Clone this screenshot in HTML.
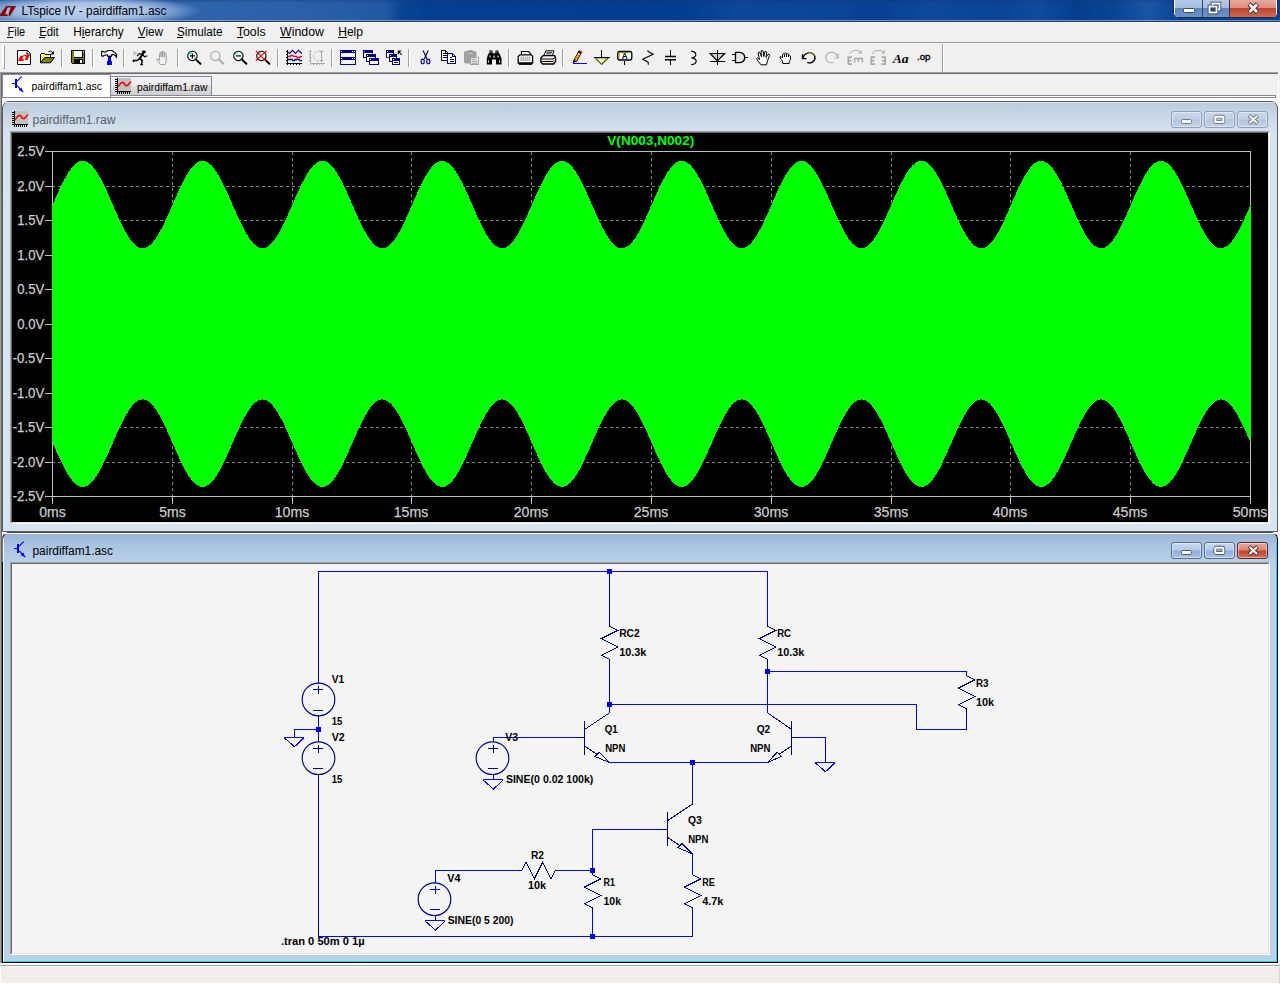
<!DOCTYPE html>
<html lang="en"><head><meta charset="utf-8"><title>LTspice IV - pairdiffam1.asc</title>
<style>
html,body{margin:0;padding:0}
body{width:1280px;height:984px;position:relative;overflow:hidden;background:#f0f0f0;font-family:"Liberation Sans",sans-serif;font-size:12px;color:#000}
div,span,svg{position:absolute;box-sizing:border-box}
svg{overflow:visible}
#title{left:0;top:0;width:1280px;height:22px;background:#0a4092}
#title .bg{left:0;top:0;width:1280px;height:21px;background:
 radial-gradient(ellipse 118px 15px at 84px 11px,rgba(196,214,240,.95) 0%,rgba(176,200,234,.9) 55%,rgba(140,172,218,.6) 80%,rgba(90,130,190,0) 100%),
 linear-gradient(rgba(20,50,110,.35) 0,rgba(20,50,110,0) 3px),
 linear-gradient(90deg,#4a78b8 0px,#3d6eb2 150px,#2f64ab 185px,#2b60a8 300px,#2259a3 385px,#0a4394 402px,#053d90 430px,#043c8f 680px,#0e469a 740px,#0c4497 840px,#083f92 870px,#0f479b 930px,#0b4396 1000px,#114a9e 1040px,#063d8f 1075px,#0a4294 1110px,#1b55a6 1150px,#0d4597 1172px,#0a4092 1280px)}
#title .ln1{left:0;top:20px;width:1280px;height:1px;background:rgba(190,210,240,.55)}
#title .ln2{left:0;top:21px;width:1280px;height:1px;background:#1d3a68}
#title .txt{left:21px;top:3px;font-size:12px;line-height:14px;white-space:nowrap;color:#000}
#menu{left:0;top:22px;width:1280px;height:22px;background:#f0f0f0;border-top:1px solid #fff}
#menu .ln1{left:0;top:19px;width:1280px;height:1px;background:#a0a0a0}
#menu .ln2{left:0;top:20px;width:1280px;height:1px;background:#fff}
#menu span{top:3px;line-height:14px;font-size:12px;white-space:nowrap}
#menu u{text-decoration:none;border-bottom:1px solid #000;display:inline-block;line-height:12px}
#tb{left:0;top:44px;width:1280px;height:28px;background:#f0f0f0}
#tb .grip{left:2px;top:2px;width:3px;height:23px;border-left:2px solid #fff;border-right:1px solid #a0a0a0;border-bottom:1px solid #a0a0a0}
#tb .sep{top:5px;margin-left:-1px;width:2px;height:18px;border-left:1px solid #a0a0a0;border-right:1px solid #fff}
#tb .end{left:942px;top:0;width:2px;height:28px;border-left:1px solid #a0a0a0;border-right:1px solid #fff}
#tb svg{top:6px;width:16px;height:16px}
#tabs{left:0;top:72px;width:1280px;height:29px;background:#f0f0f0}
#mdi{left:0;top:98px;width:1280px;height:865px;background:#fff}
#mdi .lb{left:0;top:0;width:2px;height:865px;background:#696969;border-left:1px solid #a0a0a0}
#status{left:0;top:963px;width:1280px;height:21px;background:#fff}
#status .l{left:0;top:2px;width:1280px;height:1px;background:#a0a0a0}
#status .b{left:1px;top:4px;width:1278px;height:16px;background:#f0edeb}
#status .r{left:1279px;top:4px;width:1px;height:16px;background:#d2d2d2}
.win{border:1px solid #5c5c5c;border-radius:7px 7px 0 0}
.win .ttl{left:28px;top:9px;font-size:12px;line-height:14px;white-space:nowrap}
.cb{border:1px solid #8d9db8;border-radius:3px}

</style></head>
<body>
<div id="title"><div class="bg"></div><div class="ln1"></div><div class="ln2"></div><svg style="left:0;top:0;width:18px;height:20px" viewBox="0 0 18 20"><path d="M-1 15.900 L6.200 6 H16.200 L10 15.900 Z" fill="#8c0505"/><path d="M7.600 7.500 H10.700 L8.300 14.200 H5.200 Z" fill="#a9bcdb"/><path d="M8.400 14 L8.100 16" stroke="#a9bcdb" stroke-width=".9"/></svg><svg style="left:0;top:0;width:300px;height:22px"><text x="21.6" y="15" font-size="12.4" fill="#000" font-weight="normal" text-anchor="start" textLength="144.8" lengthAdjust="spacingAndGlyphs">LTspice IV - pairdiffam1.asc</text></svg>
<div style="left:1173px;top:-3px;width:105px;height:21px;border:1px solid #1c2c4c;border-radius:0 0 5px 5px;background:#fff;overflow:hidden">
 <div style="left:1px;top:2px;width:27px;height:17px;background:linear-gradient(#b4c9e7 0,#a3bde0 47%,#5e86bf 50%,#6c93c9 100%)"></div>
 <div style="left:28px;top:2px;width:1px;height:17px;background:#30446b"></div>
 <div style="left:29px;top:2px;width:26px;height:17px;background:linear-gradient(#b4c9e7 0,#a3bde0 47%,#5e86bf 50%,#6c93c9 100%)"></div>
 <div style="left:55px;top:2px;width:1px;height:17px;background:#4a2a30"></div>
 <div style="left:56px;top:2px;width:46px;height:17px;background:linear-gradient(#e9aaa0 0,#dc8c80 47%,#c3432c 50%,#cf6a52 100%)"></div>
</div>
<svg style="left:1173px;top:0;width:105px;height:20px" viewBox="0 0 105 20">
 <rect x="10.5" y="8.5" width="11" height="4" rx="1" fill="#fff" stroke="#3a4866" stroke-width="1"/>
 <g fill="none" stroke="#3a4866" stroke-width="3.6"><rect x="39.5" y="3.5" width="7" height="6"/><rect x="36.5" y="6.5" width="7" height="6"/></g>
 <g fill="none" stroke="#fff" stroke-width="1.8"><rect x="39.5" y="3.5" width="7" height="6"/></g>
 <rect x="35" y="5" width="10" height="9" fill="#3a4866"/>
 <g fill="none" stroke="#fff" stroke-width="1.8"><rect x="36.5" y="6.5" width="7" height="6"/></g>
 <g stroke-linecap="butt"><path d="M76 4 L84.500 12.500 M84.500 4 L76 12.500" stroke="#4a3035" stroke-width="4.600"/><path d="M76.500 4.500 L84 12 M84 4.500 L76.500 12" stroke="#fff" stroke-width="2.600"/></g>
</svg></div>
<div id="menu"><div class="ln1"></div><div class="ln2"></div><svg style="left:0;top:0;width:400px;height:20px"><text x="7.5" y="13" font-size="12" fill="#000" font-weight="normal" text-anchor="start" textLength="17.7" lengthAdjust="spacingAndGlyphs">File</text><text x="39.2" y="13" font-size="12" fill="#000" font-weight="normal" text-anchor="start" textLength="19.6" lengthAdjust="spacingAndGlyphs">Edit</text><text x="73.2" y="13" font-size="12" fill="#000" font-weight="normal" text-anchor="start" textLength="50.6" lengthAdjust="spacingAndGlyphs">Hierarchy</text><text x="137.8" y="13" font-size="12" fill="#000" font-weight="normal" text-anchor="start" textLength="25.2" lengthAdjust="spacingAndGlyphs">View</text><text x="177" y="13" font-size="12" fill="#000" font-weight="normal" text-anchor="start" textLength="45.6" lengthAdjust="spacingAndGlyphs">Simulate</text><text x="236.8" y="13" font-size="12" fill="#000" font-weight="normal" text-anchor="start" textLength="28.8" lengthAdjust="spacingAndGlyphs">Tools</text><text x="280" y="13" font-size="12" fill="#000" font-weight="normal" text-anchor="start" textLength="44" lengthAdjust="spacingAndGlyphs">Window</text><text x="338.2" y="13" font-size="12" fill="#000" font-weight="normal" text-anchor="start" textLength="24.8" lengthAdjust="spacingAndGlyphs">Help</text><rect x="7" y="14" width="6" height="1" fill="#000" shape-rendering="crispEdges"/><rect x="39" y="14" width="6" height="1" fill="#000" shape-rendering="crispEdges"/><rect x="82" y="14" width="3" height="1" fill="#000" shape-rendering="crispEdges"/><rect x="138" y="14" width="7" height="1" fill="#000" shape-rendering="crispEdges"/><rect x="177" y="14" width="6" height="1" fill="#000" shape-rendering="crispEdges"/><rect x="237" y="14" width="6" height="1" fill="#000" shape-rendering="crispEdges"/><rect x="280" y="14" width="11" height="1" fill="#000" shape-rendering="crispEdges"/><rect x="338" y="14" width="9" height="1" fill="#000" shape-rendering="crispEdges"/></svg></div>
<div id="tb"><div class="grip"></div><div class="end"></div><svg style="left:16px" viewBox="0 0 16 16"><path d="M1.500 .5 H11.500 L14.500 3.500 V14.500 H1.500 Z" fill="#fff" stroke="#000"/><path d="M11 .5 V4 H14.500" fill="none" stroke="#000"/><path d="M4.600 5.800 H7.700 L6.300 8.800 H7.800 L7.300 10.900 H2 L2.900 8.800 Z" fill="#ff0000"/><path d="M7.100 4.800 H14.200 L13.400 6 L12.400 8 L11.400 9.900 H8.800 L9.800 7.200 L9 5.800 H7.400 Z" fill="#ff0000"/></svg><svg style="left:39px" viewBox="0 0 16 16"><g shape-rendering="crispEdges"><path d="M1.500 12.500 V4.500 L2.500 3.500 H5.500 L6.500 4.500 H11.500 V7" fill="#ffff00" stroke="#000"/><path d="M2 5 h1 v1 h-1z M4 5 h1 v1 h-1z M3 6 h1 v1 h-1z M2 7 h1 v1 h-1z M3 8 h1 v1 h-1z M2 9 h1 v1 h-1z M5 6 h1 v1 h-1z M6 5 h1 v1 h-1z M8 5 h1 v1 h-1z M10 5 h1 v1 h-1z M7 6 h1 v1 h-1z M9 6 h1 v1 h-1z M4 7 h1 v1 h-1z" fill="#fff"/></g><path d="M1.500 12.800 L5.500 7.500 H15.500 L11.500 12.800 Z" fill="#808000" stroke="#000"/><path d="M9.500 2 Q11.500 -.2 13.800 2.600" fill="none" stroke="#000"/><path d="M15 1 V4.500 H11.500 Z" fill="#000"/></svg><div class="sep" style="left:62px"></div><svg style="left:70px" viewBox="0 0 16 16"><g shape-rendering="crispEdges"><path d="M1 0 H15 V14 H2 L1 13 Z" fill="#000"/><rect x="2" y="1" width="12" height="12" fill="#808000"/><rect x="3.500" y="0" width="9.500" height="7.700" fill="#000"/><rect x="4" y="1" width="8" height="5.800" fill="#f8f8f8"/><rect x="13" y="1" width="1" height="1.200" fill="#fff"/><rect x="4" y="8.500" width="9" height="5.500" fill="#000"/><rect x="10" y="10" width="2" height="3" fill="#fff"/></g></svg><div class="sep" style="left:93px"></div><svg style="left:101px" viewBox="0 0 16 16"><defs><linearGradient id="hg" x1="0" y1="0" x2="0" y2="1"><stop offset="0" stop-color="#fff"/><stop offset=".55" stop-color="#f4f4f4"/><stop offset="1" stop-color="#9a9a9a"/></linearGradient><linearGradient id="hb" x1="0" y1="0" x2="1" y2="0"><stop offset="0" stop-color="#0000a0"/><stop offset=".5" stop-color="#0000ff"/><stop offset="1" stop-color="#0000c0"/></linearGradient></defs><path d="M.6 1.800 Q.6 1 1.600 1.200 L3.200 2.200 L5.500 1.600 L6.800 .5 H11.200 L14 2.600 L15.600 4.600 V7.600 L14.200 5.400 L12.400 4.600 H10.800 L10.400 6.400 H6.800 L6.200 4.800 L3.400 5.200 L2 6.200 Q.6 6.400 .6 5.400 Z" fill="url(#hg)" stroke="#000" stroke-width="1.100" stroke-linejoin="round"/><path d="M7 6.800 H10 V11 H11 V15 H6 V11 H7 Z" fill="url(#hb)"/></svg><div class="sep" style="left:124px"></div><svg style="left:132px" viewBox="0 0 16 16"><g fill="none" stroke="#000" stroke-linecap="round"><path d="M10.500 1 H13.200 V2.800 H11 Z" fill="#000" stroke-width=".8"/><path d="M11.200 3.400 L7.800 8.400" stroke-width="1.900"/><path d="M10.400 4.200 L7.400 3.600 L5.400 5.600" stroke-width="1.300"/><path d="M11 4.800 L12.600 6.800 L14.800 6" stroke-width="1.300"/><path d="M8 8.400 L10.200 10.600 L9.400 14.200 M8.800 14.400 H10.400" stroke-width="1.500"/><path d="M7.600 8.600 L5 10.600 L1.600 10.400 M1.400 10.400 V11.600" stroke-width="1.500"/></g><path d="M1.500 1.500 L4.500 3.500 M1 3.500 L3.500 5" stroke="#808080" fill="none" stroke-width=".8"/></svg><svg style="left:155px" viewBox="0 0 16 16"><path d="M5.500 14.500 L2 10 Q1.400 8.700 2.600 8.700 L4.500 10.300 V3.100 Q5.300 2.100 6.100 3.100 V7 V1.700 Q7 .7 7.800 1.700 V7 V2.100 Q8.700 1.100 9.500 2.100 V7.300 V3.700 Q10.400 2.800 11.200 3.700 V11 Q11.200 12.900 10 14.500 Z" fill="none" stroke="#a0a0a0" stroke-linejoin="round"/></svg><div class="sep" style="left:178px"></div><svg style="left:186px" viewBox="0 0 16 16"><circle cx="6.4" cy="5.9" r="4.7" fill="#fff" stroke="#000" stroke-width="1.1"/><path d="M3.300 4.600 A3.400 3.400 0 0 1 5.800 2.600" stroke="#00e0e0" fill="none" stroke-width="1.300"/><path d="M9.400 7.400 A3.400 3.400 0 0 1 7.600 9.200" stroke="#00e0e0" fill="none" stroke-width="1"/><path d="M10 9.600 L14.400 13.800" stroke="#000" stroke-width="2" stroke-linecap="round"/><path d="M3.900 5.900 H8.900 M6.400 3.400 V8.400" stroke="#000" stroke-width="1.200"/></svg><svg style="left:209px" viewBox="0 0 16 16"><circle cx="6.4" cy="5.9" r="4.7" fill="#f0f0f0" stroke="#a8a8a8" stroke-width="1.1"/><path d="M10 9.600 L14.400 13.800" stroke="#a8a8a8" stroke-width="2" stroke-linecap="round"/></svg><svg style="left:232px" viewBox="0 0 16 16"><circle cx="6.4" cy="5.9" r="4.7" fill="#fff" stroke="#000" stroke-width="1.1"/><path d="M3.300 4.600 A3.400 3.400 0 0 1 5.800 2.600" stroke="#00e0e0" fill="none" stroke-width="1.300"/><path d="M9.400 7.400 A3.400 3.400 0 0 1 7.600 9.200" stroke="#00e0e0" fill="none" stroke-width="1"/><path d="M10 9.600 L14.400 13.800" stroke="#000" stroke-width="2" stroke-linecap="round"/><path d="M3.900 5.900 H8.900" stroke="#000" stroke-width="1.200"/></svg><svg style="left:255px" viewBox="0 0 16 16"><circle cx="6.4" cy="5.9" r="4.7" fill="#fff" stroke="#000" stroke-width="1.1"/><path d="M3.300 4.600 A3.400 3.400 0 0 1 5.800 2.600" stroke="#00e0e0" fill="none" stroke-width="1.300"/><path d="M9.400 7.400 A3.400 3.400 0 0 1 7.600 9.200" stroke="#00e0e0" fill="none" stroke-width="1"/><path d="M10 9.600 L14.400 13.800" stroke="#000" stroke-width="2" stroke-linecap="round"/><path d="M.8 .8 L11.200 11.200 M11.400 1 L.8 10.800" stroke="#ff0000" stroke-width="1.200"/></svg><div class="sep" style="left:278px"></div><svg style="left:286px" viewBox="0 0 16 16"><rect x="2" y="5" width="14" height="7" fill="#e8fafa"/><g fill="none" shape-rendering="crispEdges"><path d="M1.500 0 V14 M0 13.500 H16" stroke="#000"/><path d="M0 1.500 H1 M0 4.500 H1 M0 7.500 H1 M0 10.500 H1 M1.500 14 V15 M4.500 14 V15 M7.500 14 V15 M10.500 14 V15 M13.500 14 V15" stroke="#000"/></g><path d="M2.300 2.100 L3.500 3.500 L6.500 .3 L9.600 3.500 L12.400 .3 L16 3.500" fill="none" stroke="#000080" stroke-width="1.100"/><path d="M2 6.500 H4.200 L4.700 5.500 H6.800 L7.500 6.400 H10.500 L11.200 7.500 H13.800 L14.500 6.400 H16" fill="none" stroke="#ff0000" stroke-width="1.300"/><path d="M2 9.500 H6.100 L6.800 10.600 H8.400 L9.100 9.500 H13.300 L14 10.600 H16" fill="none" stroke="#000080" stroke-width="1.300"/></svg><svg style="left:309px" viewBox="0 0 16 16"><g fill="none" stroke="#a8a8a8"><path d="M1.500 0 V13.500 H16"/><path d="M0 1.500 H1 M0 4.500 H1 M0 7.500 H1 M0 10.500 H1 M1.500 14 V15 M4.500 14 V15 M7.500 14 V15 M10.500 14 V15 M13.500 14 V15"/><path d="M10.500 .8 Q4.500 2.500 4.500 6 Q4.500 9.500 10.500 11.500" stroke-dasharray="1.500 1"/><path d="M12.500 .8 V11.500 M10.800 2.500 L12.500 .6 L14.200 2.500 M10.800 9.800 L12.500 11.700 L14.200 9.800"/></g></svg><div class="sep" style="left:332px"></div><svg style="left:340px" viewBox="0 0 16 16"><g shape-rendering="crispEdges"><rect x=".5" y=".5" width="15" height="14" fill="#f4f4f4" stroke="#000080"/><rect x="0" y="0" width="16" height="3" fill="#000080"/><rect x="0" y="7" width="16" height="3" fill="#000080"/><path d="M1 1 h1 v1 h-1z M12 1 h1 v1 h-1z M14 1 h1 v1 h-1z M1 8 h1 v1 h-1z M12 8 h1 v1 h-1z M14 8 h1 v1 h-1z" fill="#fff"/></g></svg><svg style="left:363px" viewBox="0 0 16 16"><g shape-rendering="crispEdges"><rect x="0.5" y="0.5" width="9" height="7" fill="#fff" stroke="#000080"/><rect x="0" y="0" width="10" height="2.6" fill="#000080"/><rect x="1" y="1" width="1" height="1" fill="#fff"/><rect x="3.5" y="4.5" width="9" height="7" fill="#fff" stroke="#000080"/><rect x="3" y="4" width="10" height="2.6" fill="#000080"/><rect x="4" y="5" width="1" height="1" fill="#fff"/><rect x="6.5" y="8.5" width="9" height="6" fill="#fff" stroke="#000080"/><rect x="6" y="8" width="10" height="2.6" fill="#000080"/><rect x="7" y="9" width="1" height="1" fill="#fff"/><rect x="1" y="1" width="1" height="1" fill="#ff40a0"/><rect x="9" y="3" width="1" height="1" fill="#ff40a0"/></g></svg><svg style="left:386px" viewBox="0 0 16 16"><g shape-rendering="crispEdges"><rect x="0.5" y="0.5" width="7" height="7" fill="#fff" stroke="#000080"/><rect x="0" y="0" width="8" height="2.6" fill="#000080"/><rect x="1" y="1" width="1" height="1" fill="#fff"/><rect x="3.5" y="4.5" width="7" height="7" fill="#fff" stroke="#000080"/><rect x="3" y="4" width="8" height="2.6" fill="#000080"/><rect x="4" y="5" width="1" height="1" fill="#fff"/><rect x="6.5" y="8.5" width="7" height="6" fill="#fff" stroke="#000080"/><rect x="6" y="8" width="8" height="2.6" fill="#000080"/><rect x="7" y="9" width="1" height="1" fill="#fff"/><rect x="8" y="12" width="4" height="1" fill="#000"/><rect x="1" y="7" width="1" height="1" fill="#ff40a0"/></g><path d="M15.800 5 L12.300 1.200 M12 1 H15.400 M12.300 .7 V4.200" stroke="#000" fill="none" stroke-width="1.100"/></svg><div class="sep" style="left:409px"></div><svg style="left:417px" viewBox="0 0 16 16"><path d="M6.100 .4 L10 9 M11.200 .4 L7.300 9" stroke="#000030" stroke-width="1.100" fill="none"/><ellipse cx="5.700" cy="11.400" rx="1.600" ry="2.300" stroke-width="1.100" stroke="#0000c0" fill="none"/><ellipse cx="11.300" cy="11.400" rx="1.600" ry="2.300" stroke-width="1.100" stroke="#0000c0" fill="none"/></svg><svg style="left:440px" viewBox="0 0 16 16"><g shape-rendering="crispEdges"><path d="M1.500 .5 H5.500 L8.500 3.500 V10.500 H1.500 Z" fill="#fff" stroke="#000"/><path d="M5.500 .5 V3.500 H8.500" fill="none" stroke="#000"/><path d="M3 3.500 H5 M3 5.500 H7 M3 7.500 H7" stroke="#000"/><path d="M7.500 3.500 H12.500 L15.500 6.500 V13.500 H7.500 Z" fill="#fff" stroke="#000080"/><path d="M12.500 3.500 V6.500 H15.500" fill="none" stroke="#000080"/><path d="M9.500 7 H12 M9.500 9.500 H14 M9.500 11.500 H14" stroke="#000"/></g></svg><svg style="left:463px" viewBox="0 0 16 16"><rect x="1" y="1" width="12.500" height="12.500" rx="1.800" fill="#a0a0a0"/><rect x="4.500" y="0" width="5.500" height="2.500" rx="1" fill="#a0a0a0"/><path d="M5 3.500 H9.500" stroke="#c4c4c4"/><g shape-rendering="crispEdges"><rect x="7.500" y="7.500" width="8" height="7" fill="#dcdcdc" stroke="#a0a0a0"/><path d="M9 9.500 H11.500 M9 11.500 H14 M9 13.500 H14" stroke="#a0a0a0" stroke-width=".8"/></g><path d="M13.500 7.500 L15.500 9.500" stroke="#f0f0f0"/></svg><svg style="left:486px" viewBox="0 0 16 16"><g transform="translate(0,-.5)"><path d="M3.500 1 H6.500 V3 L7.500 4 H8.500 L9.500 3 V1 H12.500 V3 L14 5 L15.500 9 V15 H10 V10 H6 V15 H.8 V9 L2 5 L3.500 3 Z" fill="#000"/><path d="M4.500 2 h1 v1 h-1z M10.500 2 h1 v1 h-1z M3.500 6 h1 v2 h-1z M11.500 6 h1 v2 h-1z M7.500 6 h1 v2.500 h-1z M2 11 h1 v2 h-1z M13 11 h1 v2 h-1z" fill="#fff"/></g></svg><div class="sep" style="left:509px"></div><svg style="left:517px" viewBox="0 0 16 16"><path d="M4.500 5 V1.500 H11.500 L13.500 3.500 V5" fill="#fff" stroke="#000" stroke-width="1.200"/><path d="M7 2.500 L8 3.500 L9 2.500" stroke="#808080" fill="none" stroke-width=".8"/><path d="M1.200 13 V6.500 L3 4.800 H14.500 L15.600 6.500 V13 Z" fill="#fff" stroke="#000" stroke-width="1.300"/><rect x="3" y="6.500" width="10.500" height="4.500" fill="#b8b8b8"/><path d="M3 7 H13.500 M3 8 H13.500 M3 9 H13.500 M3 10 H13.500" stroke="#fff" stroke-width=".5" stroke-dasharray="1 1"/><path d="M2 14 H15" stroke="#000" stroke-width="1.800"/><rect x="1.800" y="7" width="1" height="1" fill="#fff"/></svg><svg style="left:540px" viewBox="0 0 16 16"><path d="M3.800 5.500 L5.800 .8 H14 L12.400 5.500" fill="#fff" stroke="#000"/><path d="M6.500 2.400 H12 M6 3.900 H11.500" stroke="#000" stroke-width=".8"/><path d="M.8 8 L3 5.600 H14.600 L15.600 7.600 V11.600 L13.600 14 H2.600 L.8 12 Z" fill="#f4f4f4" stroke="#000" stroke-width="1.300"/><path d="M1 9 H13 M13 9 L15.400 7 M1.500 11.500 H13" stroke="#000"/><path d="M13.600 9.500 V13.500" stroke="#000" stroke-width=".8" stroke-dasharray="1 1"/><rect x="6.500" y="9.800" width="3.500" height="1.200" fill="#ffe000"/></svg><div class="sep" style="left:563px"></div><svg style="left:571px" viewBox="0 0 16 16"><path d="M2.200 12.600 L3 9.800 L8 .8 L10.600 2.200 L5.600 11.200 Z" fill="#ffee00" stroke="#000" stroke-width=".9"/><path d="M2.200 12.600 L3 9.800 L5.600 11.200 Z" fill="#000"/><path d="M4 9.400 L6.400 10.600 M5.200 7.300 L7.600 8.500 M6.400 5.200 L8.800 6.400" stroke="#ff0000" stroke-width="1"/><path d="M8 .8 L10.600 2.200 L9.600 4 L7 2.600 Z" fill="#000"/><circle cx="10.400" cy="2.300" r="1" fill="#ff0000"/><path d="M2 13.500 H16" stroke="#0000ff" shape-rendering="crispEdges"/></svg><svg style="left:594px" viewBox="0 0 16 16"><path d="M7.500 0 V7" stroke="#000" shape-rendering="crispEdges"/><path d="M.8 7.500 H14.600 L7.700 14.400 Z" fill="#f0f0f0" stroke="#606000" stroke-width="1.200"/><path d="M2.500 8.300 H12.800 L7.700 13.200" fill="none" stroke="#a0a000" stroke-width=".8"/><path d="M0 7.500 H15.500" stroke="#000" shape-rendering="crispEdges"/></svg><svg style="left:617px" viewBox="0 0 16 16"><rect x=".8" y="1.500" width="14" height="8.500" rx="1.800" fill="#fff" stroke="#000" stroke-width="1.300"/><path d="M2 8.800 V3.400 Q2 2.700 2.800 2.700 H13" fill="none" stroke="#808000" stroke-width=".9"/><path d="M7.500 10.500 V14.800" stroke="#000" stroke-width="1.200" shape-rendering="crispEdges"/><text x="7.800" y="8.900" font-size="8.200" font-weight="bold" font-family="'Liberation Sans',sans-serif" text-anchor="middle" fill="#000">A</text></svg><svg style="left:640px" viewBox="0 0 16 16"><path d="M7.700 .3 L8.100 1.600 L13.200 4.200 L2.600 9.300 L8.100 12 L8.300 14.700" fill="none" stroke="#000" stroke-width="1.150" stroke-linejoin="round"/></svg><svg style="left:663px" viewBox="0 0 16 16"><path d="M7.500 0 V6 M7.500 10 V15" fill="none" stroke="#000" stroke-width="1.200" shape-rendering="crispEdges"/><path d="M2 6.400 H13 M2 9.800 H13" fill="none" stroke="#000" stroke-width="1.500"/></svg><svg style="left:686px" viewBox="0 0 16 16"><path d="M5.100 1.100 Q9.800 1.600 9.800 4.400 Q9.800 7.200 5.500 7.900 Q10.200 8.400 10.200 11.200 Q10.200 14 5.100 14.700" fill="none" stroke="#000" stroke-width="1.150"/></svg><svg style="left:709px" viewBox="0 0 16 16"><path d="M1.200 3.500 H15.600 L8.400 10.800 Z" fill="#d4d4d4" stroke="#000" stroke-width="1.200"/><path d="M8.500 0 V15 M1 11.500 H16" stroke="#000" stroke-width="1.200" shape-rendering="crispEdges"/></svg><svg style="left:732px" viewBox="0 0 16 16"><path d="M0 4.500 H3.500 M0 10.500 H3.500 M12.500 7.500 H16" stroke="#000" stroke-width="1.200" shape-rendering="crispEdges"/><path d="M3.500 2.400 H8 Q12.700 3.200 12.700 7.500 Q12.700 11.800 8 12.700 H3.500 Z" fill="#e4e4e4" stroke="#000" stroke-width="1.300"/></svg><svg style="left:755px" viewBox="0 0 16 16"><path d="M6 14.800 L2 9.800 Q1 8.100 2.600 8.100 L4.500 9.500 L3 2.800 Q3.800 1.300 5 2.500 L6.500 6.800 L6 1.100 Q7 -.2 8.200 1.100 L8.800 6.600 L9.800 1.800 Q11 .8 11.800 2.100 L11 7.300 L13 4.300 Q14.300 3.800 14.500 5.300 L12.500 10.800 L11.500 14.800 Z" fill="#fff" stroke="#000" stroke-linejoin="round"/><rect x="11" y="7.500" width="1" height="1.200" fill="#00a0c0"/></svg><svg style="left:778px" viewBox="0 0 16 16"><path d="M4.800 13.500 L4.500 11 L2 8 Q1.500 6.500 3 6.500 L4.500 8 V4.500 Q5.500 3.200 6.500 4.500 V3.500 Q7.500 2.200 8.500 3.500 V4 Q9.500 3 10.500 4.200 V5.500 Q11.800 4.600 12.500 6 V9.500 L11.200 11.500 V13.500 Z" fill="#fff" stroke="#000" stroke-linejoin="round"/><path d="M6.500 4.500 V7 M8.500 4 V7 M10.500 5 V7" stroke="#000"/></svg><svg style="left:801px" viewBox="0 0 16 16"><path d="M1.600 8.400 Q3 4.400 6.400 3 Q10 1.800 12.800 4.400 Q15 7.200 13.400 10.200 Q11.400 13.400 7.600 12.900 L6.300 12.400" fill="none" stroke="#000" stroke-width="1.300"/><path d="M8 2.600 Q11.500 2.400 13.600 5.800" fill="none" stroke="#b0a000" stroke-width="1"/><path d="M1.500 4.200 V8.600 H5.600" fill="none" stroke="#000" stroke-width="1.400"/></svg><svg style="left:824px" viewBox="0 0 16 16"><path d="M13.800 7.600 Q12.600 3.600 9.200 2.400 Q5.600 1.600 3 4.200 Q.8 7 2.400 10 Q4.400 13.200 8.200 12.700 L9.500 12.200" fill="none" stroke="#b0b0b0" stroke-width="1.100"/><path d="M14.200 3.500 V8 H10.200" fill="none" stroke="#b0b0b0" stroke-width="1.100"/></svg><svg style="left:847px" viewBox="0 0 16 16"><g fill="none" stroke="#a8a8a8"><path d="M1.300 6.500 V14.800 M1.300 7.200 H5 M1.300 10.600 H4.300 M1.300 14.100 H5" stroke-width="1.700"/><path d="M7 8.400 H16 M7.600 8.400 V12.600 M11.400 8.400 V12 M15.400 8.400 V12.600" stroke-width="1.500"/><path d="M2 4 L4.800 1.200 Q9 -.6 13 1.400 L14.200 3 M14.300 .4 V3.200 H11.500" stroke-width="1"/></g></svg><svg style="left:870px" viewBox="0 0 16 16"><g fill="none" stroke="#a8a8a8"><path d="M1.300 6.500 V14.800 M1.300 7.200 H5 M1.300 10.600 H4.300 M1.300 14.100 H5" stroke-width="1.700"/><path d="M15.200 6.500 V14.800 M15.200 7.200 H11.500 M15.200 10.600 H12.200 M15.200 14.100 H11.500" stroke-width="1.700"/><path d="M2 4 L4.800 1.200 Q9 -.6 13 1.400 L14.200 3 M14.300 .4 V3.200 H11.500" stroke-width="1"/></g></svg><svg style="left:893px" viewBox="0 0 16 16"><text x="-.3" y="12.700" font-size="13.500" font-weight="bold" font-style="italic" font-family="'Liberation Serif',serif" fill="#000" textLength="16" lengthAdjust="spacingAndGlyphs">Aa</text></svg><svg style="left:916px" viewBox="0 0 16 16"><text x="1" y="9.700" font-size="9.600" font-family="'Liberation Sans',sans-serif" fill="#000" stroke="#000" stroke-width=".35" textLength="13.300" lengthAdjust="spacingAndGlyphs">.op</text></svg></div>
<div id="tabs">
<div style="left:0;top:0;width:1279px;height:1px;background:#a0a0a0"></div>
<div style="left:0;top:1px;width:1279px;height:1px;background:#696969"></div>
<div style="left:0;top:1px;width:1px;height:28px;background:#a0a0a0"></div>
<div style="left:1px;top:2px;width:1px;height:27px;background:#696969"></div>
<div style="left:1278px;top:0px;width:1px;height:29px;background:#fff"></div>
<div style="left:2px;top:26px;width:1276px;height:3px;background:#fff"></div>
<div style="left:2px;top:23px;width:1274px;height:3px;background:#fff;border:1px solid #82879a"></div>
<div style="left:110px;top:4px;width:102px;height:19px;border:1px solid #82879a;border-bottom:none;background:linear-gradient(#f2f2f2,#eaeaea 50%,#dcdcdc 50%,#d0d0d0)"></div>
<div style="left:2px;top:2px;width:109px;height:23px;border:1px solid #82879a;border-bottom:none;background:#fff"></div>
<svg style="left:11px;top:4px;width:14px;height:17px" viewBox="0 0 14 17"><g fill="none" stroke="#0000ff" shape-rendering="crispEdges"><path d="M1 7.500 H4"/><path d="M5 3 V12" stroke-width="2"/></g><path d="M6 5.300 L10.700 .6 M6 9.700 L12.200 16.200" stroke="#0000ff" fill="none" stroke-width="1.100"/><path d="M11.300 15.300 L8 13.900 L10.200 11.800 Z" fill="#0000ff" stroke="#0000ff" stroke-width=".6"/></svg>
<svg style="left:115px;top:6px;width:16px;height:16px" viewBox="0 0 16 16"><g shape-rendering="crispEdges"><rect x="3" y="0" width="13" height="13" fill="#c0c0c0"/><path d="M2.500 0 V16 M0 13.500 H16" stroke="#000"/><path d="M0 1.500 H2 M0 3.500 H2 M0 5.500 H2 M0 7.500 H2 M0 9.500 H2 M0 11.500 H2 M4.500 14 V16 M6.500 14 V16 M8.500 14 V16 M10.500 14 V16 M12.500 14 V16 M14.500 14 V16" stroke="#000"/></g><path d="M3 8.500 L6.500 4.500 H8.500 L10.500 7.500 H12.500 L16 3.500" fill="none" stroke="#ff0000" stroke-width="1.600"/></svg>
<svg style="left:0;top:0;width:300px;height:29px" font-family="'Liberation Sans',sans-serif"><text x="31.5" y="17.5" font-size="11" fill="#000" font-weight="normal" text-anchor="start" textLength="70.5" lengthAdjust="spacingAndGlyphs">pairdiffam1.asc</text><text x="137" y="18.5" font-size="11" fill="#000" font-weight="normal" text-anchor="start" textLength="70.5" lengthAdjust="spacingAndGlyphs">pairdiffam1.raw</text></svg>
</div>
<div id="mdi"><div class="lb"></div>
<div class="win" style="left:2px;top:3px;width:1276px;height:431px;background:linear-gradient(#bccbdc 0,#c9d7e6 14px,#d7e3f0 32px,#d7e4f2 100%)">
<div style="left:0;top:0;width:1274px;height:1px;background:rgba(255,255,255,.5);border-radius:6px 6px 0 0"></div>
<svg style="left:9px;top:9px;width:16px;height:16px" viewBox="0 0 16 16"><g shape-rendering="crispEdges"><rect x="3" y="0" width="13" height="13" fill="#c0c0c0"/><path d="M2.500 0 V16 M0 13.500 H16" stroke="#000"/><path d="M0 1.500 H2 M0 3.500 H2 M0 5.500 H2 M0 7.500 H2 M0 9.500 H2 M0 11.500 H2 M4.500 14 V16 M6.500 14 V16 M8.500 14 V16 M10.500 14 V16 M12.500 14 V16 M14.500 14 V16" stroke="#000"/></g><path d="M3 8.500 L6.500 4.500 H8.500 L10.500 7.500 H12.500 L16 3.500" fill="none" stroke="#ff0000" stroke-width="1.600"/></svg>
<svg style="left:0;top:0;width:300px;height:30px"><text x="29.5" y="22" font-size="12" fill="#5b5f6e" font-weight="normal" text-anchor="start" textLength="83" lengthAdjust="spacingAndGlyphs">pairdiffam1.raw</text></svg>
<div class="cb" style="left:1168px;top:9px;width:31px;height:17px;background:linear-gradient(#c8d6e8 0,#c0cfe3 48%,#b4c5dc 52%,#c3d2e5 100%);border-color:#8d9db8;box-shadow:inset 0 0 0 1px rgba(255,255,255,.45)"></div><div class="cb" style="left:1201px;top:9px;width:31px;height:17px;background:linear-gradient(#c8d6e8 0,#c0cfe3 48%,#b4c5dc 52%,#c3d2e5 100%);border-color:#8d9db8;box-shadow:inset 0 0 0 1px rgba(255,255,255,.45)"></div><div class="cb" style="left:1234px;top:9px;width:31px;height:17px;background:linear-gradient(#c8d6e8 0,#c0cfe3 48%,#b4c5dc 52%,#c3d2e5 100%);border-color:#8d9db8;box-shadow:inset 0 0 0 1px rgba(255,255,255,.45)"></div><svg style="left:1168px;top:9px;width:100px;height:17px" viewBox="0 0 100 17">
<rect x="10.5" y="8.5" width="10" height="4" rx="1.2" fill="#fff" stroke="#6f7b92"/>
<rect x="44.3" y="5.700" width="8" height="5.300" rx="1" fill="none" stroke="#6f7b92" stroke-width="3.800"/>
<rect x="44.3" y="5.700" width="8" height="5.300" rx=".5" fill="none" stroke="#fff" stroke-width="2.100"/>
<path d="M78 4.5 L86.500 12.500 M86.500 4.500 L78 12.500" stroke="#6f7b92" stroke-width="4"/><path d="M78.500 5 L86 12 M86 5 L78.500 12" stroke="#fff" stroke-width="2"/>
</svg>
<div style="left:7px;top:29px;width:1260px;height:393px;border:1px solid;border-color:#a0a0a0 #fff #fff #a0a0a0"></div>
<div style="left:8px;top:30px;width:1258px;height:391px;border:1px solid;border-color:#696969 #e3e3e3 #e3e3e3 #696969"></div>
<div style="left:9px;top:31px;width:1256px;height:389px;background:#000;overflow:hidden"><svg style="left:-12px;top:-133px;width:1280px;height:984px" viewBox="0 0 1280 984" font-family="'Liberation Sans',sans-serif"><g shape-rendering="crispEdges" fill="none"><path d="M53 186.5 H1250" stroke="#858585" stroke-dasharray="3 3" stroke-dashoffset="1"/><path d="M53 220.5 H1250" stroke="#858585" stroke-dasharray="3 3" stroke-dashoffset="1"/><path d="M53 255.5 H1250" stroke="#858585" stroke-dasharray="3 3" stroke-dashoffset="1"/><path d="M53 289.5 H1250" stroke="#858585" stroke-dasharray="3 3" stroke-dashoffset="1"/><path d="M53 324.5 H1250" stroke="#858585" stroke-dasharray="3 3" stroke-dashoffset="1"/><path d="M53 358.5 H1250" stroke="#858585" stroke-dasharray="3 3" stroke-dashoffset="1"/><path d="M53 393.5 H1250" stroke="#858585" stroke-dasharray="3 3" stroke-dashoffset="1"/><path d="M53 427.5 H1250" stroke="#858585" stroke-dasharray="3 3" stroke-dashoffset="1"/><path d="M53 462.5 H1250" stroke="#858585" stroke-dasharray="3 3" stroke-dashoffset="1"/><path d="M172.5 152 V496" stroke="#858585" stroke-dasharray="3 3"/><path d="M292.5 152 V496" stroke="#858585" stroke-dasharray="3 3"/><path d="M411.5 152 V496" stroke="#858585" stroke-dasharray="3 3"/><path d="M531.5 152 V496" stroke="#858585" stroke-dasharray="3 3"/><path d="M651.5 152 V496" stroke="#858585" stroke-dasharray="3 3"/><path d="M771.5 152 V496" stroke="#858585" stroke-dasharray="3 3"/><path d="M891.5 152 V496" stroke="#858585" stroke-dasharray="3 3"/><path d="M1010.5 152 V496" stroke="#858585" stroke-dasharray="3 3"/><path d="M1130.5 152 V496" stroke="#858585" stroke-dasharray="3 3"/><rect x="52.5" y="151.5" width="1198" height="345" stroke="#c0c0c0"/><path d="M45 151.5 H52" stroke="#c0c0c0"/><path d="M52.5 497 V504" stroke="#c0c0c0"/><path d="M45 186.5 H52" stroke="#c0c0c0"/><path d="M172.5 497 V504" stroke="#c0c0c0"/><path d="M45 220.5 H52" stroke="#c0c0c0"/><path d="M292.5 497 V504" stroke="#c0c0c0"/><path d="M45 255.5 H52" stroke="#c0c0c0"/><path d="M411.5 497 V504" stroke="#c0c0c0"/><path d="M45 289.5 H52" stroke="#c0c0c0"/><path d="M531.5 497 V504" stroke="#c0c0c0"/><path d="M45 324.5 H52" stroke="#c0c0c0"/><path d="M651.5 497 V504" stroke="#c0c0c0"/><path d="M45 358.5 H52" stroke="#c0c0c0"/><path d="M771.5 497 V504" stroke="#c0c0c0"/><path d="M45 393.5 H52" stroke="#c0c0c0"/><path d="M891.5 497 V504" stroke="#c0c0c0"/><path d="M45 427.5 H52" stroke="#c0c0c0"/><path d="M1010.5 497 V504" stroke="#c0c0c0"/><path d="M45 462.5 H52" stroke="#c0c0c0"/><path d="M1130.5 497 V504" stroke="#c0c0c0"/><path d="M45 496.5 H52" stroke="#c0c0c0"/><path d="M1250.5 497 V504" stroke="#c0c0c0"/></g><path d="M52.0 206.3 L52.5 205.2 L53.0 204.0 L53.5 202.9 L54.0 201.8 L54.5 200.6 L55.0 199.5 L55.5 198.3 L56.0 197.2 L56.5 196.1 L57.0 195.0 L57.5 193.8 L58.0 192.7 L58.5 191.6 L59.0 190.5 L59.5 189.5 L60.0 188.4 L60.5 187.3 L61.0 186.3 L61.5 185.2 L62.0 184.2 L62.5 183.2 L63.0 182.2 L63.5 181.2 L64.0 180.3 L64.5 179.3 L65.0 178.4 L65.5 177.5 L66.0 176.6 L66.5 175.7 L67.0 174.9 L67.5 174.0 L68.0 173.2 L68.5 172.4 L69.0 171.7 L69.5 170.9 L70.0 170.2 L70.5 169.5 L71.0 168.8 L71.5 168.2 L72.0 167.6 L72.5 167.0 L73.0 166.4 L73.5 165.8 L74.0 165.3 L74.5 164.8 L75.0 164.4 L75.5 163.9 L76.0 163.5 L76.5 163.1 L77.0 162.8 L77.5 162.4 L78.0 162.1 L78.5 161.9 L79.0 161.6 L79.5 161.4 L80.0 161.3 L80.5 161.1 L81.0 161.0 L81.5 160.9 L82.0 160.8 L82.5 160.8 L83.0 160.8 L83.5 160.8 L84.0 160.9 L84.5 161.0 L85.0 161.1 L85.5 161.3 L86.0 161.4 L86.5 161.6 L87.0 161.9 L87.5 162.1 L88.0 162.4 L88.5 162.8 L89.0 163.1 L89.5 163.5 L90.0 163.9 L90.5 164.4 L91.0 164.8 L91.5 165.3 L92.0 165.8 L92.5 166.4 L93.0 167.0 L93.5 167.6 L94.0 168.2 L94.5 168.8 L95.0 169.5 L95.5 170.2 L96.0 170.9 L96.5 171.7 L97.0 172.4 L97.5 173.2 L98.0 174.0 L98.5 174.9 L99.0 175.7 L99.5 176.6 L100.0 177.5 L100.5 178.4 L101.0 179.3 L101.5 180.3 L102.0 181.2 L102.5 182.2 L103.0 183.2 L103.5 184.2 L104.0 185.2 L104.5 186.3 L105.0 187.3 L105.5 188.4 L106.0 189.5 L106.5 190.5 L107.0 191.6 L107.5 192.7 L108.0 193.8 L108.5 195.0 L109.0 196.1 L109.5 197.2 L110.0 198.3 L110.5 199.5 L111.0 200.6 L111.5 201.8 L112.0 202.9 L112.5 204.0 L113.0 205.2 L113.5 206.3 L114.0 207.5 L114.5 208.6 L115.0 209.8 L115.5 210.9 L116.0 212.0 L116.5 213.2 L117.0 214.3 L117.5 215.4 L118.0 216.5 L118.5 217.6 L119.0 218.7 L119.5 219.8 L120.0 220.8 L120.5 221.9 L121.0 222.9 L121.5 224.0 L122.0 225.0 L122.5 226.0 L123.0 227.0 L123.5 228.0 L124.0 228.9 L124.5 229.9 L125.0 230.8 L125.5 231.7 L126.0 232.6 L126.5 233.4 L127.0 234.3 L127.5 235.1 L128.0 235.9 L128.5 236.7 L129.0 237.5 L129.5 238.2 L130.0 238.9 L130.5 239.6 L131.0 240.3 L131.5 240.9 L132.0 241.6 L132.5 242.2 L133.0 242.7 L133.5 243.3 L134.0 243.8 L134.5 244.3 L135.0 244.7 L135.5 245.2 L136.0 245.6 L136.5 245.9 L137.0 246.3 L137.5 246.6 L138.0 246.9 L138.5 247.2 L139.0 247.4 L139.5 247.6 L140.0 247.8 L140.5 247.9 L141.0 248.0 L141.5 248.1 L142.0 248.2 L142.5 248.2 L143.0 248.2 L143.5 248.2 L144.0 248.1 L144.5 248.0 L145.0 247.9 L145.5 247.7 L146.0 247.5 L146.5 247.3 L147.0 247.1 L147.5 246.8 L148.0 246.5 L148.5 246.2 L149.0 245.8 L149.5 245.4 L150.0 245.0 L150.5 244.5 L151.0 244.1 L151.5 243.6 L152.0 243.1 L152.5 242.5 L153.0 241.9 L153.5 241.3 L154.0 240.7 L154.5 240.0 L155.0 239.3 L155.5 238.6 L156.0 237.9 L156.5 237.2 L157.0 236.4 L157.5 235.6 L158.0 234.8 L158.5 234.0 L159.0 233.1 L159.5 232.2 L160.0 231.3 L160.5 230.4 L161.0 229.5 L161.5 228.5 L162.0 227.6 L162.5 226.6 L163.0 225.6 L163.5 224.6 L164.0 223.5 L164.5 222.5 L165.0 221.5 L165.5 220.4 L166.0 219.3 L166.5 218.2 L167.0 217.2 L167.5 216.1 L168.0 214.9 L168.5 213.8 L169.0 212.7 L169.5 211.6 L170.0 210.4 L170.5 209.3 L171.0 208.2 L171.5 207.0 L172.0 205.9 L172.5 204.7 L173.0 203.6 L173.5 202.4 L174.0 201.3 L174.5 200.2 L175.0 199.0 L175.5 197.9 L176.0 196.7 L176.5 195.6 L177.0 194.5 L177.5 193.4 L178.0 192.3 L178.5 191.2 L179.0 190.1 L179.5 189.0 L180.0 188.0 L180.5 186.9 L181.0 185.9 L181.5 184.8 L182.0 183.8 L182.5 182.8 L183.0 181.8 L183.5 180.9 L184.0 179.9 L184.5 179.0 L185.0 178.0 L185.5 177.1 L186.0 176.3 L186.5 175.4 L187.0 174.5 L187.5 173.7 L188.0 172.9 L188.5 172.1 L189.0 171.4 L189.5 170.6 L190.0 169.9 L190.5 169.2 L191.0 168.6 L191.5 167.9 L192.0 167.3 L192.5 166.7 L193.0 166.2 L193.5 165.6 L194.0 165.1 L194.5 164.6 L195.0 164.2 L195.5 163.8 L196.0 163.4 L196.5 163.0 L197.0 162.6 L197.5 162.3 L198.0 162.0 L198.5 161.8 L199.0 161.6 L199.5 161.4 L200.0 161.2 L200.5 161.1 L201.0 160.9 L201.5 160.9 L202.0 160.8 L202.5 160.8 L203.0 160.8 L203.5 160.9 L204.0 160.9 L204.5 161.0 L205.0 161.2 L205.5 161.3 L206.0 161.5 L206.5 161.7 L207.0 162.0 L207.5 162.3 L208.0 162.6 L208.5 162.9 L209.0 163.3 L209.5 163.7 L210.0 164.1 L210.5 164.5 L211.0 165.0 L211.5 165.5 L212.0 166.1 L212.5 166.6 L213.0 167.2 L213.5 167.8 L214.0 168.4 L214.5 169.1 L215.0 169.8 L215.5 170.5 L216.0 171.2 L216.5 172.0 L217.0 172.8 L217.5 173.6 L218.0 174.4 L218.5 175.2 L219.0 176.1 L219.5 177.0 L220.0 177.9 L220.5 178.8 L221.0 179.7 L221.5 180.7 L222.0 181.6 L222.5 182.6 L223.0 183.6 L223.5 184.6 L224.0 185.7 L224.5 186.7 L225.0 187.8 L225.5 188.8 L226.0 189.9 L226.5 191.0 L227.0 192.1 L227.5 193.2 L228.0 194.3 L228.5 195.4 L229.0 196.5 L229.5 197.7 L230.0 198.8 L230.5 199.9 L231.0 201.1 L231.5 202.2 L232.0 203.4 L232.5 204.5 L233.0 205.6 L233.5 206.8 L234.0 207.9 L234.5 209.1 L235.0 210.2 L235.5 211.3 L236.0 212.5 L236.5 213.6 L237.0 214.7 L237.5 215.8 L238.0 216.9 L238.5 218.0 L239.0 219.1 L239.5 220.2 L240.0 221.2 L240.5 222.3 L241.0 223.3 L241.5 224.4 L242.0 225.4 L242.5 226.4 L243.0 227.4 L243.5 228.3 L244.0 229.3 L244.5 230.2 L245.0 231.1 L245.5 232.0 L246.0 232.9 L246.5 233.8 L247.0 234.6 L247.5 235.4 L248.0 236.2 L248.5 237.0 L249.0 237.8 L249.5 238.5 L250.0 239.2 L250.5 239.9 L251.0 240.6 L251.5 241.2 L252.0 241.8 L252.5 242.4 L253.0 242.9 L253.5 243.5 L254.0 244.0 L254.5 244.5 L255.0 244.9 L255.5 245.3 L256.0 245.7 L256.5 246.1 L257.0 246.4 L257.5 246.7 L258.0 247.0 L258.5 247.3 L259.0 247.5 L259.5 247.7 L260.0 247.8 L260.5 248.0 L261.0 248.1 L261.5 248.1 L262.0 248.2 L262.5 248.2 L263.0 248.2 L263.5 248.1 L264.0 248.1 L264.5 247.9 L265.0 247.8 L265.5 247.6 L266.0 247.4 L266.5 247.2 L267.0 247.0 L267.5 246.7 L268.0 246.4 L268.5 246.0 L269.0 245.6 L269.5 245.2 L270.0 244.8 L270.5 244.4 L271.0 243.9 L271.5 243.4 L272.0 242.8 L272.5 242.3 L273.0 241.7 L273.5 241.1 L274.0 240.4 L274.5 239.8 L275.0 239.1 L275.5 238.4 L276.0 237.6 L276.5 236.9 L277.0 236.1 L277.5 235.3 L278.0 234.5 L278.5 233.6 L279.0 232.7 L279.5 231.9 L280.0 231.0 L280.5 230.0 L281.0 229.1 L281.5 228.1 L282.0 227.2 L282.5 226.2 L283.0 225.2 L283.5 224.2 L284.0 223.1 L284.5 222.1 L285.0 221.0 L285.5 220.0 L286.0 218.9 L286.5 217.8 L287.0 216.7 L287.5 215.6 L288.0 214.5 L288.5 213.4 L289.0 212.3 L289.5 211.1 L290.0 210.0 L290.5 208.8 L291.0 207.7 L291.5 206.6 L292.0 205.4 L292.5 204.3 L293.0 203.1 L293.5 202.0 L294.0 200.8 L294.5 199.7 L295.0 198.6 L295.5 197.4 L296.0 196.3 L296.5 195.2 L297.0 194.1 L297.5 192.9 L298.0 191.8 L298.5 190.8 L299.0 189.7 L299.5 188.6 L300.0 187.5 L300.5 186.5 L301.0 185.5 L301.5 184.4 L302.0 183.4 L302.5 182.4 L303.0 181.4 L303.5 180.5 L304.0 179.5 L304.5 178.6 L305.0 177.7 L305.5 176.8 L306.0 175.9 L306.5 175.0 L307.0 174.2 L307.5 173.4 L308.0 172.6 L308.5 171.8 L309.0 171.1 L309.5 170.4 L310.0 169.7 L310.5 169.0 L311.0 168.3 L311.5 167.7 L312.0 167.1 L312.5 166.5 L313.0 165.9 L313.5 165.4 L314.0 164.9 L314.5 164.5 L315.0 164.0 L315.5 163.6 L316.0 163.2 L316.5 162.8 L317.0 162.5 L317.5 162.2 L318.0 161.9 L318.5 161.7 L319.0 161.5 L319.5 161.3 L320.0 161.1 L320.5 161.0 L321.0 160.9 L321.5 160.8 L322.0 160.8 L322.5 160.8 L323.0 160.8 L323.5 160.9 L324.0 161.0 L324.5 161.1 L325.0 161.2 L325.5 161.4 L326.0 161.6 L326.5 161.8 L327.0 162.1 L327.5 162.4 L328.0 162.7 L328.5 163.1 L329.0 163.4 L329.5 163.8 L330.0 164.3 L330.5 164.7 L331.0 165.2 L331.5 165.7 L332.0 166.3 L332.5 166.8 L333.0 167.4 L333.5 168.1 L334.0 168.7 L334.5 169.4 L335.0 170.1 L335.5 170.8 L336.0 171.5 L336.5 172.3 L337.0 173.1 L337.5 173.9 L338.0 174.7 L338.5 175.6 L339.0 176.4 L339.5 177.3 L340.0 178.2 L340.5 179.1 L341.0 180.1 L341.5 181.0 L342.0 182.0 L342.5 183.0 L343.0 184.0 L343.5 185.0 L344.0 186.1 L344.5 187.1 L345.0 188.2 L345.5 189.2 L346.0 190.3 L346.5 191.4 L347.0 192.5 L347.5 193.6 L348.0 194.7 L348.5 195.8 L349.0 197.0 L349.5 198.1 L350.0 199.2 L350.5 200.4 L351.0 201.5 L351.5 202.7 L352.0 203.8 L352.5 205.0 L353.0 206.1 L353.5 207.2 L354.0 208.4 L354.5 209.5 L355.0 210.7 L355.5 211.8 L356.0 212.9 L356.5 214.0 L357.0 215.2 L357.5 216.3 L358.0 217.4 L358.5 218.5 L359.0 219.5 L359.5 220.6 L360.0 221.7 L360.5 222.7 L361.0 223.8 L361.5 224.8 L362.0 225.8 L362.5 226.8 L363.0 227.8 L363.5 228.7 L364.0 229.7 L364.5 230.6 L365.0 231.5 L365.5 232.4 L366.0 233.3 L366.5 234.1 L367.0 235.0 L367.5 235.8 L368.0 236.6 L368.5 237.3 L369.0 238.1 L369.5 238.8 L370.0 239.5 L370.5 240.2 L371.0 240.8 L371.5 241.4 L372.0 242.0 L372.5 242.6 L373.0 243.2 L373.5 243.7 L374.0 244.2 L374.5 244.6 L375.0 245.1 L375.5 245.5 L376.0 245.9 L376.5 246.2 L377.0 246.6 L377.5 246.9 L378.0 247.1 L378.5 247.4 L379.0 247.6 L379.5 247.7 L380.0 247.9 L380.5 248.0 L381.0 248.1 L381.5 248.2 L382.0 248.2 L382.5 248.2 L383.0 248.2 L383.5 248.1 L384.0 248.0 L384.5 247.9 L385.0 247.7 L385.5 247.6 L386.0 247.4 L386.5 247.1 L387.0 246.9 L387.5 246.6 L388.0 246.2 L388.5 245.9 L389.0 245.5 L389.5 245.1 L390.0 244.6 L390.5 244.2 L391.0 243.7 L391.5 243.2 L392.0 242.6 L392.5 242.0 L393.0 241.4 L393.5 240.8 L394.0 240.2 L394.5 239.5 L395.0 238.8 L395.5 238.1 L396.0 237.3 L396.5 236.6 L397.0 235.8 L397.5 235.0 L398.0 234.1 L398.5 233.3 L399.0 232.4 L399.5 231.5 L400.0 230.6 L400.5 229.7 L401.0 228.7 L401.5 227.8 L402.0 226.8 L402.5 225.8 L403.0 224.8 L403.5 223.8 L404.0 222.7 L404.5 221.7 L405.0 220.6 L405.5 219.5 L406.0 218.5 L406.5 217.4 L407.0 216.3 L407.5 215.2 L408.0 214.0 L408.5 212.9 L409.0 211.8 L409.5 210.7 L410.0 209.5 L410.5 208.4 L411.0 207.2 L411.5 206.1 L412.0 205.0 L412.5 203.8 L413.0 202.7 L413.5 201.5 L414.0 200.4 L414.5 199.2 L415.0 198.1 L415.5 197.0 L416.0 195.8 L416.5 194.7 L417.0 193.6 L417.5 192.5 L418.0 191.4 L418.5 190.3 L419.0 189.2 L419.5 188.2 L420.0 187.1 L420.5 186.1 L421.0 185.0 L421.5 184.0 L422.0 183.0 L422.5 182.0 L423.0 181.0 L423.5 180.1 L424.0 179.1 L424.5 178.2 L425.0 177.3 L425.5 176.4 L426.0 175.6 L426.5 174.7 L427.0 173.9 L427.5 173.1 L428.0 172.3 L428.5 171.5 L429.0 170.8 L429.5 170.1 L430.0 169.4 L430.5 168.7 L431.0 168.1 L431.5 167.4 L432.0 166.8 L432.5 166.3 L433.0 165.7 L433.5 165.2 L434.0 164.7 L434.5 164.3 L435.0 163.8 L435.5 163.4 L436.0 163.1 L436.5 162.7 L437.0 162.4 L437.5 162.1 L438.0 161.8 L438.5 161.6 L439.0 161.4 L439.5 161.2 L440.0 161.1 L440.5 161.0 L441.0 160.9 L441.5 160.8 L442.0 160.8 L442.5 160.8 L443.0 160.8 L443.5 160.9 L444.0 161.0 L444.5 161.1 L445.0 161.3 L445.5 161.5 L446.0 161.7 L446.5 161.9 L447.0 162.2 L447.5 162.5 L448.0 162.8 L448.5 163.2 L449.0 163.6 L449.5 164.0 L450.0 164.5 L450.5 164.9 L451.0 165.4 L451.5 165.9 L452.0 166.5 L452.5 167.1 L453.0 167.7 L453.5 168.3 L454.0 169.0 L454.5 169.7 L455.0 170.4 L455.5 171.1 L456.0 171.8 L456.5 172.6 L457.0 173.4 L457.5 174.2 L458.0 175.0 L458.5 175.9 L459.0 176.8 L459.5 177.7 L460.0 178.6 L460.5 179.5 L461.0 180.5 L461.5 181.4 L462.0 182.4 L462.5 183.4 L463.0 184.4 L463.5 185.5 L464.0 186.5 L464.5 187.5 L465.0 188.6 L465.5 189.7 L466.0 190.8 L466.5 191.8 L467.0 192.9 L467.5 194.1 L468.0 195.2 L468.5 196.3 L469.0 197.4 L469.5 198.6 L470.0 199.7 L470.5 200.8 L471.0 202.0 L471.5 203.1 L472.0 204.3 L472.5 205.4 L473.0 206.6 L473.5 207.7 L474.0 208.8 L474.5 210.0 L475.0 211.1 L475.5 212.3 L476.0 213.4 L476.5 214.5 L477.0 215.6 L477.5 216.7 L478.0 217.8 L478.5 218.9 L479.0 220.0 L479.5 221.0 L480.0 222.1 L480.5 223.1 L481.0 224.2 L481.5 225.2 L482.0 226.2 L482.5 227.2 L483.0 228.1 L483.5 229.1 L484.0 230.0 L484.5 231.0 L485.0 231.9 L485.5 232.7 L486.0 233.6 L486.5 234.5 L487.0 235.3 L487.5 236.1 L488.0 236.9 L488.5 237.6 L489.0 238.4 L489.5 239.1 L490.0 239.8 L490.5 240.4 L491.0 241.1 L491.5 241.7 L492.0 242.3 L492.5 242.8 L493.0 243.4 L493.5 243.9 L494.0 244.4 L494.5 244.8 L495.0 245.2 L495.5 245.6 L496.0 246.0 L496.5 246.4 L497.0 246.7 L497.5 247.0 L498.0 247.2 L498.5 247.4 L499.0 247.6 L499.5 247.8 L500.0 247.9 L500.5 248.1 L501.0 248.1 L501.5 248.2 L502.0 248.2 L502.5 248.2 L503.0 248.1 L503.5 248.1 L504.0 248.0 L504.5 247.8 L505.0 247.7 L505.5 247.5 L506.0 247.3 L506.5 247.0 L507.0 246.7 L507.5 246.4 L508.0 246.1 L508.5 245.7 L509.0 245.3 L509.5 244.9 L510.0 244.5 L510.5 244.0 L511.0 243.5 L511.5 242.9 L512.0 242.4 L512.5 241.8 L513.0 241.2 L513.5 240.6 L514.0 239.9 L514.5 239.2 L515.0 238.5 L515.5 237.8 L516.0 237.0 L516.5 236.2 L517.0 235.4 L517.5 234.6 L518.0 233.8 L518.5 232.9 L519.0 232.0 L519.5 231.1 L520.0 230.2 L520.5 229.3 L521.0 228.3 L521.5 227.4 L522.0 226.4 L522.5 225.4 L523.0 224.4 L523.5 223.3 L524.0 222.3 L524.5 221.2 L525.0 220.2 L525.5 219.1 L526.0 218.0 L526.5 216.9 L527.0 215.8 L527.5 214.7 L528.0 213.6 L528.5 212.5 L529.0 211.3 L529.5 210.2 L530.0 209.1 L530.5 207.9 L531.0 206.8 L531.5 205.6 L532.0 204.5 L532.5 203.4 L533.0 202.2 L533.5 201.1 L534.0 199.9 L534.5 198.8 L535.0 197.7 L535.5 196.5 L536.0 195.4 L536.5 194.3 L537.0 193.2 L537.5 192.1 L538.0 191.0 L538.5 189.9 L539.0 188.8 L539.5 187.8 L540.0 186.7 L540.5 185.7 L541.0 184.6 L541.5 183.6 L542.0 182.6 L542.5 181.6 L543.0 180.7 L543.5 179.7 L544.0 178.8 L544.5 177.9 L545.0 177.0 L545.5 176.1 L546.0 175.2 L546.5 174.4 L547.0 173.6 L547.5 172.8 L548.0 172.0 L548.5 171.2 L549.0 170.5 L549.5 169.8 L550.0 169.1 L550.5 168.4 L551.0 167.8 L551.5 167.2 L552.0 166.6 L552.5 166.1 L553.0 165.5 L553.5 165.0 L554.0 164.5 L554.5 164.1 L555.0 163.7 L555.5 163.3 L556.0 162.9 L556.5 162.6 L557.0 162.3 L557.5 162.0 L558.0 161.7 L558.5 161.5 L559.0 161.3 L559.5 161.2 L560.0 161.0 L560.5 160.9 L561.0 160.9 L561.5 160.8 L562.0 160.8 L562.5 160.8 L563.0 160.9 L563.5 160.9 L564.0 161.1 L564.5 161.2 L565.0 161.4 L565.5 161.6 L566.0 161.8 L566.5 162.0 L567.0 162.3 L567.5 162.6 L568.0 163.0 L568.5 163.4 L569.0 163.8 L569.5 164.2 L570.0 164.6 L570.5 165.1 L571.0 165.6 L571.5 166.2 L572.0 166.7 L572.5 167.3 L573.0 167.9 L573.5 168.6 L574.0 169.2 L574.5 169.9 L575.0 170.6 L575.5 171.4 L576.0 172.1 L576.5 172.9 L577.0 173.7 L577.5 174.5 L578.0 175.4 L578.5 176.3 L579.0 177.1 L579.5 178.0 L580.0 179.0 L580.5 179.9 L581.0 180.9 L581.5 181.8 L582.0 182.8 L582.5 183.8 L583.0 184.8 L583.5 185.9 L584.0 186.9 L584.5 188.0 L585.0 189.0 L585.5 190.1 L586.0 191.2 L586.5 192.3 L587.0 193.4 L587.5 194.5 L588.0 195.6 L588.5 196.7 L589.0 197.9 L589.5 199.0 L590.0 200.2 L590.5 201.3 L591.0 202.4 L591.5 203.6 L592.0 204.7 L592.5 205.9 L593.0 207.0 L593.5 208.2 L594.0 209.3 L594.5 210.4 L595.0 211.6 L595.5 212.7 L596.0 213.8 L596.5 214.9 L597.0 216.1 L597.5 217.2 L598.0 218.2 L598.5 219.3 L599.0 220.4 L599.5 221.5 L600.0 222.5 L600.5 223.5 L601.0 224.6 L601.5 225.6 L602.0 226.6 L602.5 227.6 L603.0 228.5 L603.5 229.5 L604.0 230.4 L604.5 231.3 L605.0 232.2 L605.5 233.1 L606.0 234.0 L606.5 234.8 L607.0 235.6 L607.5 236.4 L608.0 237.2 L608.5 237.9 L609.0 238.6 L609.5 239.3 L610.0 240.0 L610.5 240.7 L611.0 241.3 L611.5 241.9 L612.0 242.5 L612.5 243.1 L613.0 243.6 L613.5 244.1 L614.0 244.5 L614.5 245.0 L615.0 245.4 L615.5 245.8 L616.0 246.2 L616.5 246.5 L617.0 246.8 L617.5 247.1 L618.0 247.3 L618.5 247.5 L619.0 247.7 L619.5 247.9 L620.0 248.0 L620.5 248.1 L621.0 248.2 L621.5 248.2 L622.0 248.2 L622.5 248.2 L623.0 248.1 L623.5 248.0 L624.0 247.9 L624.5 247.8 L625.0 247.6 L625.5 247.4 L626.0 247.2 L626.5 246.9 L627.0 246.6 L627.5 246.3 L628.0 245.9 L628.5 245.6 L629.0 245.2 L629.5 244.7 L630.0 244.3 L630.5 243.8 L631.0 243.3 L631.5 242.7 L632.0 242.2 L632.5 241.6 L633.0 240.9 L633.5 240.3 L634.0 239.6 L634.5 238.9 L635.0 238.2 L635.5 237.5 L636.0 236.7 L636.5 235.9 L637.0 235.1 L637.5 234.3 L638.0 233.4 L638.5 232.6 L639.0 231.7 L639.5 230.8 L640.0 229.9 L640.5 228.9 L641.0 228.0 L641.5 227.0 L642.0 226.0 L642.5 225.0 L643.0 224.0 L643.5 222.9 L644.0 221.9 L644.5 220.8 L645.0 219.8 L645.5 218.7 L646.0 217.6 L646.5 216.5 L647.0 215.4 L647.5 214.3 L648.0 213.2 L648.5 212.0 L649.0 210.9 L649.5 209.8 L650.0 208.6 L650.5 207.5 L651.0 206.3 L651.5 205.2 L652.0 204.0 L652.5 202.9 L653.0 201.8 L653.5 200.6 L654.0 199.5 L654.5 198.3 L655.0 197.2 L655.5 196.1 L656.0 195.0 L656.5 193.8 L657.0 192.7 L657.5 191.6 L658.0 190.5 L658.5 189.5 L659.0 188.4 L659.5 187.3 L660.0 186.3 L660.5 185.2 L661.0 184.2 L661.5 183.2 L662.0 182.2 L662.5 181.2 L663.0 180.3 L663.5 179.3 L664.0 178.4 L664.5 177.5 L665.0 176.6 L665.5 175.7 L666.0 174.9 L666.5 174.0 L667.0 173.2 L667.5 172.4 L668.0 171.7 L668.5 170.9 L669.0 170.2 L669.5 169.5 L670.0 168.8 L670.5 168.2 L671.0 167.6 L671.5 167.0 L672.0 166.4 L672.5 165.8 L673.0 165.3 L673.5 164.8 L674.0 164.4 L674.5 163.9 L675.0 163.5 L675.5 163.1 L676.0 162.8 L676.5 162.4 L677.0 162.1 L677.5 161.9 L678.0 161.6 L678.5 161.4 L679.0 161.3 L679.5 161.1 L680.0 161.0 L680.5 160.9 L681.0 160.8 L681.5 160.8 L682.0 160.8 L682.5 160.8 L683.0 160.9 L683.5 161.0 L684.0 161.1 L684.5 161.3 L685.0 161.4 L685.5 161.6 L686.0 161.9 L686.5 162.1 L687.0 162.4 L687.5 162.8 L688.0 163.1 L688.5 163.5 L689.0 163.9 L689.5 164.4 L690.0 164.8 L690.5 165.3 L691.0 165.8 L691.5 166.4 L692.0 167.0 L692.5 167.6 L693.0 168.2 L693.5 168.8 L694.0 169.5 L694.5 170.2 L695.0 170.9 L695.5 171.7 L696.0 172.4 L696.5 173.2 L697.0 174.0 L697.5 174.9 L698.0 175.7 L698.5 176.6 L699.0 177.5 L699.5 178.4 L700.0 179.3 L700.5 180.3 L701.0 181.2 L701.5 182.2 L702.0 183.2 L702.5 184.2 L703.0 185.2 L703.5 186.3 L704.0 187.3 L704.5 188.4 L705.0 189.5 L705.5 190.5 L706.0 191.6 L706.5 192.7 L707.0 193.8 L707.5 195.0 L708.0 196.1 L708.5 197.2 L709.0 198.3 L709.5 199.5 L710.0 200.6 L710.5 201.8 L711.0 202.9 L711.5 204.0 L712.0 205.2 L712.5 206.3 L713.0 207.5 L713.5 208.6 L714.0 209.8 L714.5 210.9 L715.0 212.0 L715.5 213.2 L716.0 214.3 L716.5 215.4 L717.0 216.5 L717.5 217.6 L718.0 218.7 L718.5 219.8 L719.0 220.8 L719.5 221.9 L720.0 222.9 L720.5 224.0 L721.0 225.0 L721.5 226.0 L722.0 227.0 L722.5 228.0 L723.0 228.9 L723.5 229.9 L724.0 230.8 L724.5 231.7 L725.0 232.6 L725.5 233.4 L726.0 234.3 L726.5 235.1 L727.0 235.9 L727.5 236.7 L728.0 237.5 L728.5 238.2 L729.0 238.9 L729.5 239.6 L730.0 240.3 L730.5 240.9 L731.0 241.6 L731.5 242.2 L732.0 242.7 L732.5 243.3 L733.0 243.8 L733.5 244.3 L734.0 244.7 L734.5 245.2 L735.0 245.6 L735.5 245.9 L736.0 246.3 L736.5 246.6 L737.0 246.9 L737.5 247.2 L738.0 247.4 L738.5 247.6 L739.0 247.8 L739.5 247.9 L740.0 248.0 L740.5 248.1 L741.0 248.2 L741.5 248.2 L742.0 248.2 L742.5 248.2 L743.0 248.1 L743.5 248.0 L744.0 247.9 L744.5 247.7 L745.0 247.5 L745.5 247.3 L746.0 247.1 L746.5 246.8 L747.0 246.5 L747.5 246.2 L748.0 245.8 L748.5 245.4 L749.0 245.0 L749.5 244.5 L750.0 244.1 L750.5 243.6 L751.0 243.1 L751.5 242.5 L752.0 241.9 L752.5 241.3 L753.0 240.7 L753.5 240.0 L754.0 239.3 L754.5 238.6 L755.0 237.9 L755.5 237.2 L756.0 236.4 L756.5 235.6 L757.0 234.8 L757.5 234.0 L758.0 233.1 L758.5 232.2 L759.0 231.3 L759.5 230.4 L760.0 229.5 L760.5 228.5 L761.0 227.6 L761.5 226.6 L762.0 225.6 L762.5 224.6 L763.0 223.5 L763.5 222.5 L764.0 221.5 L764.5 220.4 L765.0 219.3 L765.5 218.2 L766.0 217.2 L766.5 216.1 L767.0 214.9 L767.5 213.8 L768.0 212.7 L768.5 211.6 L769.0 210.4 L769.5 209.3 L770.0 208.2 L770.5 207.0 L771.0 205.9 L771.5 204.7 L772.0 203.6 L772.5 202.4 L773.0 201.3 L773.5 200.2 L774.0 199.0 L774.5 197.9 L775.0 196.7 L775.5 195.6 L776.0 194.5 L776.5 193.4 L777.0 192.3 L777.5 191.2 L778.0 190.1 L778.5 189.0 L779.0 188.0 L779.5 186.9 L780.0 185.9 L780.5 184.8 L781.0 183.8 L781.5 182.8 L782.0 181.8 L782.5 180.9 L783.0 179.9 L783.5 179.0 L784.0 178.0 L784.5 177.1 L785.0 176.3 L785.5 175.4 L786.0 174.5 L786.5 173.7 L787.0 172.9 L787.5 172.1 L788.0 171.4 L788.5 170.6 L789.0 169.9 L789.5 169.2 L790.0 168.6 L790.5 167.9 L791.0 167.3 L791.5 166.7 L792.0 166.2 L792.5 165.6 L793.0 165.1 L793.5 164.6 L794.0 164.2 L794.5 163.8 L795.0 163.4 L795.5 163.0 L796.0 162.6 L796.5 162.3 L797.0 162.0 L797.5 161.8 L798.0 161.6 L798.5 161.4 L799.0 161.2 L799.5 161.1 L800.0 160.9 L800.5 160.9 L801.0 160.8 L801.5 160.8 L802.0 160.8 L802.5 160.9 L803.0 160.9 L803.5 161.0 L804.0 161.2 L804.5 161.3 L805.0 161.5 L805.5 161.7 L806.0 162.0 L806.5 162.3 L807.0 162.6 L807.5 162.9 L808.0 163.3 L808.5 163.7 L809.0 164.1 L809.5 164.5 L810.0 165.0 L810.5 165.5 L811.0 166.1 L811.5 166.6 L812.0 167.2 L812.5 167.8 L813.0 168.4 L813.5 169.1 L814.0 169.8 L814.5 170.5 L815.0 171.2 L815.5 172.0 L816.0 172.8 L816.5 173.6 L817.0 174.4 L817.5 175.2 L818.0 176.1 L818.5 177.0 L819.0 177.9 L819.5 178.8 L820.0 179.7 L820.5 180.7 L821.0 181.6 L821.5 182.6 L822.0 183.6 L822.5 184.6 L823.0 185.7 L823.5 186.7 L824.0 187.8 L824.5 188.8 L825.0 189.9 L825.5 191.0 L826.0 192.1 L826.5 193.2 L827.0 194.3 L827.5 195.4 L828.0 196.5 L828.5 197.7 L829.0 198.8 L829.5 199.9 L830.0 201.1 L830.5 202.2 L831.0 203.4 L831.5 204.5 L832.0 205.6 L832.5 206.8 L833.0 207.9 L833.5 209.1 L834.0 210.2 L834.5 211.3 L835.0 212.5 L835.5 213.6 L836.0 214.7 L836.5 215.8 L837.0 216.9 L837.5 218.0 L838.0 219.1 L838.5 220.2 L839.0 221.2 L839.5 222.3 L840.0 223.3 L840.5 224.4 L841.0 225.4 L841.5 226.4 L842.0 227.4 L842.5 228.3 L843.0 229.3 L843.5 230.2 L844.0 231.1 L844.5 232.0 L845.0 232.9 L845.5 233.8 L846.0 234.6 L846.5 235.4 L847.0 236.2 L847.5 237.0 L848.0 237.8 L848.5 238.5 L849.0 239.2 L849.5 239.9 L850.0 240.6 L850.5 241.2 L851.0 241.8 L851.5 242.4 L852.0 242.9 L852.5 243.5 L853.0 244.0 L853.5 244.5 L854.0 244.9 L854.5 245.3 L855.0 245.7 L855.5 246.1 L856.0 246.4 L856.5 246.7 L857.0 247.0 L857.5 247.3 L858.0 247.5 L858.5 247.7 L859.0 247.8 L859.5 248.0 L860.0 248.1 L860.5 248.1 L861.0 248.2 L861.5 248.2 L862.0 248.2 L862.5 248.1 L863.0 248.1 L863.5 247.9 L864.0 247.8 L864.5 247.6 L865.0 247.4 L865.5 247.2 L866.0 247.0 L866.5 246.7 L867.0 246.4 L867.5 246.0 L868.0 245.6 L868.5 245.2 L869.0 244.8 L869.5 244.4 L870.0 243.9 L870.5 243.4 L871.0 242.8 L871.5 242.3 L872.0 241.7 L872.5 241.1 L873.0 240.4 L873.5 239.8 L874.0 239.1 L874.5 238.4 L875.0 237.6 L875.5 236.9 L876.0 236.1 L876.5 235.3 L877.0 234.5 L877.5 233.6 L878.0 232.7 L878.5 231.9 L879.0 231.0 L879.5 230.0 L880.0 229.1 L880.5 228.1 L881.0 227.2 L881.5 226.2 L882.0 225.2 L882.5 224.2 L883.0 223.1 L883.5 222.1 L884.0 221.0 L884.5 220.0 L885.0 218.9 L885.5 217.8 L886.0 216.7 L886.5 215.6 L887.0 214.5 L887.5 213.4 L888.0 212.3 L888.5 211.1 L889.0 210.0 L889.5 208.8 L890.0 207.7 L890.5 206.6 L891.0 205.4 L891.5 204.3 L892.0 203.1 L892.5 202.0 L893.0 200.8 L893.5 199.7 L894.0 198.6 L894.5 197.4 L895.0 196.3 L895.5 195.2 L896.0 194.1 L896.5 192.9 L897.0 191.8 L897.5 190.8 L898.0 189.7 L898.5 188.6 L899.0 187.5 L899.5 186.5 L900.0 185.5 L900.5 184.4 L901.0 183.4 L901.5 182.4 L902.0 181.4 L902.5 180.5 L903.0 179.5 L903.5 178.6 L904.0 177.7 L904.5 176.8 L905.0 175.9 L905.5 175.0 L906.0 174.2 L906.5 173.4 L907.0 172.6 L907.5 171.8 L908.0 171.1 L908.5 170.4 L909.0 169.7 L909.5 169.0 L910.0 168.3 L910.5 167.7 L911.0 167.1 L911.5 166.5 L912.0 165.9 L912.5 165.4 L913.0 164.9 L913.5 164.5 L914.0 164.0 L914.5 163.6 L915.0 163.2 L915.5 162.8 L916.0 162.5 L916.5 162.2 L917.0 161.9 L917.5 161.7 L918.0 161.5 L918.5 161.3 L919.0 161.1 L919.5 161.0 L920.0 160.9 L920.5 160.8 L921.0 160.8 L921.5 160.8 L922.0 160.8 L922.5 160.9 L923.0 161.0 L923.5 161.1 L924.0 161.2 L924.5 161.4 L925.0 161.6 L925.5 161.8 L926.0 162.1 L926.5 162.4 L927.0 162.7 L927.5 163.1 L928.0 163.4 L928.5 163.8 L929.0 164.3 L929.5 164.7 L930.0 165.2 L930.5 165.7 L931.0 166.3 L931.5 166.8 L932.0 167.4 L932.5 168.1 L933.0 168.7 L933.5 169.4 L934.0 170.1 L934.5 170.8 L935.0 171.5 L935.5 172.3 L936.0 173.1 L936.5 173.9 L937.0 174.7 L937.5 175.6 L938.0 176.4 L938.5 177.3 L939.0 178.2 L939.5 179.1 L940.0 180.1 L940.5 181.0 L941.0 182.0 L941.5 183.0 L942.0 184.0 L942.5 185.0 L943.0 186.1 L943.5 187.1 L944.0 188.2 L944.5 189.2 L945.0 190.3 L945.5 191.4 L946.0 192.5 L946.5 193.6 L947.0 194.7 L947.5 195.8 L948.0 197.0 L948.5 198.1 L949.0 199.2 L949.5 200.4 L950.0 201.5 L950.5 202.7 L951.0 203.8 L951.5 205.0 L952.0 206.1 L952.5 207.2 L953.0 208.4 L953.5 209.5 L954.0 210.7 L954.5 211.8 L955.0 212.9 L955.5 214.0 L956.0 215.2 L956.5 216.3 L957.0 217.4 L957.5 218.5 L958.0 219.5 L958.5 220.6 L959.0 221.7 L959.5 222.7 L960.0 223.8 L960.5 224.8 L961.0 225.8 L961.5 226.8 L962.0 227.8 L962.5 228.7 L963.0 229.7 L963.5 230.6 L964.0 231.5 L964.5 232.4 L965.0 233.3 L965.5 234.1 L966.0 235.0 L966.5 235.8 L967.0 236.6 L967.5 237.3 L968.0 238.1 L968.5 238.8 L969.0 239.5 L969.5 240.2 L970.0 240.8 L970.5 241.4 L971.0 242.0 L971.5 242.6 L972.0 243.2 L972.5 243.7 L973.0 244.2 L973.5 244.6 L974.0 245.1 L974.5 245.5 L975.0 245.9 L975.5 246.2 L976.0 246.6 L976.5 246.9 L977.0 247.1 L977.5 247.4 L978.0 247.6 L978.5 247.7 L979.0 247.9 L979.5 248.0 L980.0 248.1 L980.5 248.2 L981.0 248.2 L981.5 248.2 L982.0 248.2 L982.5 248.1 L983.0 248.0 L983.5 247.9 L984.0 247.7 L984.5 247.6 L985.0 247.4 L985.5 247.1 L986.0 246.9 L986.5 246.6 L987.0 246.2 L987.5 245.9 L988.0 245.5 L988.5 245.1 L989.0 244.6 L989.5 244.2 L990.0 243.7 L990.5 243.2 L991.0 242.6 L991.5 242.0 L992.0 241.4 L992.5 240.8 L993.0 240.2 L993.5 239.5 L994.0 238.8 L994.5 238.1 L995.0 237.3 L995.5 236.6 L996.0 235.8 L996.5 235.0 L997.0 234.1 L997.5 233.3 L998.0 232.4 L998.5 231.5 L999.0 230.6 L999.5 229.7 L1000.0 228.7 L1000.5 227.8 L1001.0 226.8 L1001.5 225.8 L1002.0 224.8 L1002.5 223.8 L1003.0 222.7 L1003.5 221.7 L1004.0 220.6 L1004.5 219.5 L1005.0 218.5 L1005.5 217.4 L1006.0 216.3 L1006.5 215.2 L1007.0 214.0 L1007.5 212.9 L1008.0 211.8 L1008.5 210.7 L1009.0 209.5 L1009.5 208.4 L1010.0 207.2 L1010.5 206.1 L1011.0 205.0 L1011.5 203.8 L1012.0 202.7 L1012.5 201.5 L1013.0 200.4 L1013.5 199.2 L1014.0 198.1 L1014.5 197.0 L1015.0 195.8 L1015.5 194.7 L1016.0 193.6 L1016.5 192.5 L1017.0 191.4 L1017.5 190.3 L1018.0 189.2 L1018.5 188.2 L1019.0 187.1 L1019.5 186.1 L1020.0 185.0 L1020.5 184.0 L1021.0 183.0 L1021.5 182.0 L1022.0 181.0 L1022.5 180.1 L1023.0 179.1 L1023.5 178.2 L1024.0 177.3 L1024.5 176.4 L1025.0 175.6 L1025.5 174.7 L1026.0 173.9 L1026.5 173.1 L1027.0 172.3 L1027.5 171.5 L1028.0 170.8 L1028.5 170.1 L1029.0 169.4 L1029.5 168.7 L1030.0 168.1 L1030.5 167.4 L1031.0 166.8 L1031.5 166.3 L1032.0 165.7 L1032.5 165.2 L1033.0 164.7 L1033.5 164.3 L1034.0 163.8 L1034.5 163.4 L1035.0 163.1 L1035.5 162.7 L1036.0 162.4 L1036.5 162.1 L1037.0 161.8 L1037.5 161.6 L1038.0 161.4 L1038.5 161.2 L1039.0 161.1 L1039.5 161.0 L1040.0 160.9 L1040.5 160.8 L1041.0 160.8 L1041.5 160.8 L1042.0 160.8 L1042.5 160.9 L1043.0 161.0 L1043.5 161.1 L1044.0 161.3 L1044.5 161.5 L1045.0 161.7 L1045.5 161.9 L1046.0 162.2 L1046.5 162.5 L1047.0 162.8 L1047.5 163.2 L1048.0 163.6 L1048.5 164.0 L1049.0 164.5 L1049.5 164.9 L1050.0 165.4 L1050.5 165.9 L1051.0 166.5 L1051.5 167.1 L1052.0 167.7 L1052.5 168.3 L1053.0 169.0 L1053.5 169.7 L1054.0 170.4 L1054.5 171.1 L1055.0 171.8 L1055.5 172.6 L1056.0 173.4 L1056.5 174.2 L1057.0 175.0 L1057.5 175.9 L1058.0 176.8 L1058.5 177.7 L1059.0 178.6 L1059.5 179.5 L1060.0 180.5 L1060.5 181.4 L1061.0 182.4 L1061.5 183.4 L1062.0 184.4 L1062.5 185.5 L1063.0 186.5 L1063.5 187.5 L1064.0 188.6 L1064.5 189.7 L1065.0 190.8 L1065.5 191.8 L1066.0 192.9 L1066.5 194.1 L1067.0 195.2 L1067.5 196.3 L1068.0 197.4 L1068.5 198.6 L1069.0 199.7 L1069.5 200.8 L1070.0 202.0 L1070.5 203.1 L1071.0 204.3 L1071.5 205.4 L1072.0 206.6 L1072.5 207.7 L1073.0 208.8 L1073.5 210.0 L1074.0 211.1 L1074.5 212.3 L1075.0 213.4 L1075.5 214.5 L1076.0 215.6 L1076.5 216.7 L1077.0 217.8 L1077.5 218.9 L1078.0 220.0 L1078.5 221.0 L1079.0 222.1 L1079.5 223.1 L1080.0 224.2 L1080.5 225.2 L1081.0 226.2 L1081.5 227.2 L1082.0 228.1 L1082.5 229.1 L1083.0 230.0 L1083.5 231.0 L1084.0 231.9 L1084.5 232.7 L1085.0 233.6 L1085.5 234.5 L1086.0 235.3 L1086.5 236.1 L1087.0 236.9 L1087.5 237.6 L1088.0 238.4 L1088.5 239.1 L1089.0 239.8 L1089.5 240.4 L1090.0 241.1 L1090.5 241.7 L1091.0 242.3 L1091.5 242.8 L1092.0 243.4 L1092.5 243.9 L1093.0 244.4 L1093.5 244.8 L1094.0 245.2 L1094.5 245.6 L1095.0 246.0 L1095.5 246.4 L1096.0 246.7 L1096.5 247.0 L1097.0 247.2 L1097.5 247.4 L1098.0 247.6 L1098.5 247.8 L1099.0 247.9 L1099.5 248.1 L1100.0 248.1 L1100.5 248.2 L1101.0 248.2 L1101.5 248.2 L1102.0 248.1 L1102.5 248.1 L1103.0 248.0 L1103.5 247.8 L1104.0 247.7 L1104.5 247.5 L1105.0 247.3 L1105.5 247.0 L1106.0 246.7 L1106.5 246.4 L1107.0 246.1 L1107.5 245.7 L1108.0 245.3 L1108.5 244.9 L1109.0 244.5 L1109.5 244.0 L1110.0 243.5 L1110.5 242.9 L1111.0 242.4 L1111.5 241.8 L1112.0 241.2 L1112.5 240.6 L1113.0 239.9 L1113.5 239.2 L1114.0 238.5 L1114.5 237.8 L1115.0 237.0 L1115.5 236.2 L1116.0 235.4 L1116.5 234.6 L1117.0 233.8 L1117.5 232.9 L1118.0 232.0 L1118.5 231.1 L1119.0 230.2 L1119.5 229.3 L1120.0 228.3 L1120.5 227.4 L1121.0 226.4 L1121.5 225.4 L1122.0 224.4 L1122.5 223.3 L1123.0 222.3 L1123.5 221.2 L1124.0 220.2 L1124.5 219.1 L1125.0 218.0 L1125.5 216.9 L1126.0 215.8 L1126.5 214.7 L1127.0 213.6 L1127.5 212.5 L1128.0 211.3 L1128.5 210.2 L1129.0 209.1 L1129.5 207.9 L1130.0 206.8 L1130.5 205.6 L1131.0 204.5 L1131.5 203.4 L1132.0 202.2 L1132.5 201.1 L1133.0 199.9 L1133.5 198.8 L1134.0 197.7 L1134.5 196.5 L1135.0 195.4 L1135.5 194.3 L1136.0 193.2 L1136.5 192.1 L1137.0 191.0 L1137.5 189.9 L1138.0 188.8 L1138.5 187.8 L1139.0 186.7 L1139.5 185.7 L1140.0 184.6 L1140.5 183.6 L1141.0 182.6 L1141.5 181.6 L1142.0 180.7 L1142.5 179.7 L1143.0 178.8 L1143.5 177.9 L1144.0 177.0 L1144.5 176.1 L1145.0 175.2 L1145.5 174.4 L1146.0 173.6 L1146.5 172.8 L1147.0 172.0 L1147.5 171.2 L1148.0 170.5 L1148.5 169.8 L1149.0 169.1 L1149.5 168.4 L1150.0 167.8 L1150.5 167.2 L1151.0 166.6 L1151.5 166.1 L1152.0 165.5 L1152.5 165.0 L1153.0 164.5 L1153.5 164.1 L1154.0 163.7 L1154.5 163.3 L1155.0 162.9 L1155.5 162.6 L1156.0 162.3 L1156.5 162.0 L1157.0 161.7 L1157.5 161.5 L1158.0 161.3 L1158.5 161.2 L1159.0 161.0 L1159.5 160.9 L1160.0 160.9 L1160.5 160.8 L1161.0 160.8 L1161.5 160.8 L1162.0 160.9 L1162.5 160.9 L1163.0 161.1 L1163.5 161.2 L1164.0 161.4 L1164.5 161.6 L1165.0 161.8 L1165.5 162.0 L1166.0 162.3 L1166.5 162.6 L1167.0 163.0 L1167.5 163.4 L1168.0 163.8 L1168.5 164.2 L1169.0 164.6 L1169.5 165.1 L1170.0 165.6 L1170.5 166.2 L1171.0 166.7 L1171.5 167.3 L1172.0 167.9 L1172.5 168.6 L1173.0 169.2 L1173.5 169.9 L1174.0 170.6 L1174.5 171.4 L1175.0 172.1 L1175.5 172.9 L1176.0 173.7 L1176.5 174.5 L1177.0 175.4 L1177.5 176.3 L1178.0 177.1 L1178.5 178.0 L1179.0 179.0 L1179.5 179.9 L1180.0 180.9 L1180.5 181.8 L1181.0 182.8 L1181.5 183.8 L1182.0 184.8 L1182.5 185.9 L1183.0 186.9 L1183.5 188.0 L1184.0 189.0 L1184.5 190.1 L1185.0 191.2 L1185.5 192.3 L1186.0 193.4 L1186.5 194.5 L1187.0 195.6 L1187.5 196.7 L1188.0 197.9 L1188.5 199.0 L1189.0 200.2 L1189.5 201.3 L1190.0 202.4 L1190.5 203.6 L1191.0 204.7 L1191.5 205.9 L1192.0 207.0 L1192.5 208.2 L1193.0 209.3 L1193.5 210.4 L1194.0 211.6 L1194.5 212.7 L1195.0 213.8 L1195.5 214.9 L1196.0 216.1 L1196.5 217.2 L1197.0 218.2 L1197.5 219.3 L1198.0 220.4 L1198.5 221.5 L1199.0 222.5 L1199.5 223.5 L1200.0 224.6 L1200.5 225.6 L1201.0 226.6 L1201.5 227.6 L1202.0 228.5 L1202.5 229.5 L1203.0 230.4 L1203.5 231.3 L1204.0 232.2 L1204.5 233.1 L1205.0 234.0 L1205.5 234.8 L1206.0 235.6 L1206.5 236.4 L1207.0 237.2 L1207.5 237.9 L1208.0 238.6 L1208.5 239.3 L1209.0 240.0 L1209.5 240.7 L1210.0 241.3 L1210.5 241.9 L1211.0 242.5 L1211.5 243.1 L1212.0 243.6 L1212.5 244.1 L1213.0 244.5 L1213.5 245.0 L1214.0 245.4 L1214.5 245.8 L1215.0 246.2 L1215.5 246.5 L1216.0 246.8 L1216.5 247.1 L1217.0 247.3 L1217.5 247.5 L1218.0 247.7 L1218.5 247.9 L1219.0 248.0 L1219.5 248.1 L1220.0 248.2 L1220.5 248.2 L1221.0 248.2 L1221.5 248.2 L1222.0 248.1 L1222.5 248.0 L1223.0 247.9 L1223.5 247.8 L1224.0 247.6 L1224.5 247.4 L1225.0 247.2 L1225.5 246.9 L1226.0 246.6 L1226.5 246.3 L1227.0 245.9 L1227.5 245.6 L1228.0 245.2 L1228.5 244.7 L1229.0 244.3 L1229.5 243.8 L1230.0 243.3 L1230.5 242.7 L1231.0 242.2 L1231.5 241.6 L1232.0 240.9 L1232.5 240.3 L1233.0 239.6 L1233.5 238.9 L1234.0 238.2 L1234.5 237.5 L1235.0 236.7 L1235.5 235.9 L1236.0 235.1 L1236.5 234.3 L1237.0 233.4 L1237.5 232.6 L1238.0 231.7 L1238.5 230.8 L1239.0 229.9 L1239.5 228.9 L1240.0 228.0 L1240.5 227.0 L1241.0 226.0 L1241.5 225.0 L1242.0 224.0 L1242.5 222.9 L1243.0 221.9 L1243.5 220.8 L1244.0 219.8 L1244.5 218.7 L1245.0 217.6 L1245.5 216.5 L1246.0 215.4 L1246.5 214.3 L1247.0 213.2 L1247.5 212.0 L1248.0 210.9 L1248.5 209.8 L1249.0 208.6 L1249.5 207.5 L1250.0 206.3 L1250.5 205.2 L1251.0 204.0 L1251.0 443.6 L1250.5 442.4 L1250.0 441.3 L1249.5 440.1 L1249.0 439.0 L1248.5 437.8 L1248.0 436.7 L1247.5 435.6 L1247.0 434.4 L1246.5 433.3 L1246.0 432.2 L1245.5 431.1 L1245.0 430.0 L1244.5 428.9 L1244.0 427.8 L1243.5 426.8 L1243.0 425.7 L1242.5 424.7 L1242.0 423.6 L1241.5 422.6 L1241.0 421.6 L1240.5 420.6 L1240.0 419.6 L1239.5 418.7 L1239.0 417.7 L1238.5 416.8 L1238.0 415.9 L1237.5 415.0 L1237.0 414.2 L1236.5 413.3 L1236.0 412.5 L1235.5 411.7 L1235.0 410.9 L1234.5 410.1 L1234.0 409.4 L1233.5 408.7 L1233.0 408.0 L1232.5 407.3 L1232.0 406.7 L1231.5 406.0 L1231.0 405.4 L1230.5 404.9 L1230.0 404.3 L1229.5 403.8 L1229.0 403.3 L1228.5 402.9 L1228.0 402.4 L1227.5 402.0 L1227.0 401.7 L1226.5 401.3 L1226.0 401.0 L1225.5 400.7 L1225.0 400.4 L1224.5 400.2 L1224.0 400.0 L1223.5 399.8 L1223.0 399.7 L1222.5 399.6 L1222.0 399.5 L1221.5 399.4 L1221.0 399.4 L1220.5 399.4 L1220.0 399.4 L1219.5 399.5 L1219.0 399.6 L1218.5 399.7 L1218.0 399.9 L1217.5 400.1 L1217.0 400.3 L1216.5 400.5 L1216.0 400.8 L1215.5 401.1 L1215.0 401.4 L1214.5 401.8 L1214.0 402.2 L1213.5 402.6 L1213.0 403.1 L1212.5 403.5 L1212.0 404.0 L1211.5 404.5 L1211.0 405.1 L1210.5 405.7 L1210.0 406.3 L1209.5 406.9 L1209.0 407.6 L1208.5 408.3 L1208.0 409.0 L1207.5 409.7 L1207.0 410.4 L1206.5 411.2 L1206.0 412.0 L1205.5 412.8 L1205.0 413.6 L1204.5 414.5 L1204.0 415.4 L1203.5 416.3 L1203.0 417.2 L1202.5 418.1 L1202.0 419.1 L1201.5 420.0 L1201.0 421.0 L1200.5 422.0 L1200.0 423.0 L1199.5 424.1 L1199.0 425.1 L1198.5 426.1 L1198.0 427.2 L1197.5 428.3 L1197.0 429.4 L1196.5 430.4 L1196.0 431.5 L1195.5 432.7 L1195.0 433.8 L1194.5 434.9 L1194.0 436.0 L1193.5 437.2 L1193.0 438.3 L1192.5 439.4 L1192.0 440.6 L1191.5 441.7 L1191.0 442.9 L1190.5 444.0 L1190.0 445.2 L1189.5 446.3 L1189.0 447.4 L1188.5 448.6 L1188.0 449.7 L1187.5 450.9 L1187.0 452.0 L1186.5 453.1 L1186.0 454.2 L1185.5 455.3 L1185.0 456.4 L1184.5 457.5 L1184.0 458.6 L1183.5 459.6 L1183.0 460.7 L1182.5 461.7 L1182.0 462.8 L1181.5 463.8 L1181.0 464.8 L1180.5 465.8 L1180.0 466.7 L1179.5 467.7 L1179.0 468.6 L1178.5 469.6 L1178.0 470.5 L1177.5 471.3 L1177.0 472.2 L1176.5 473.1 L1176.0 473.9 L1175.5 474.7 L1175.0 475.5 L1174.5 476.2 L1174.0 477.0 L1173.5 477.7 L1173.0 478.4 L1172.5 479.0 L1172.0 479.7 L1171.5 480.3 L1171.0 480.9 L1170.5 481.4 L1170.0 482.0 L1169.5 482.5 L1169.0 483.0 L1168.5 483.4 L1168.0 483.8 L1167.5 484.2 L1167.0 484.6 L1166.5 485.0 L1166.0 485.3 L1165.5 485.6 L1165.0 485.8 L1164.5 486.0 L1164.0 486.2 L1163.5 486.4 L1163.0 486.5 L1162.5 486.7 L1162.0 486.7 L1161.5 486.8 L1161.0 486.8 L1160.5 486.8 L1160.0 486.7 L1159.5 486.7 L1159.0 486.6 L1158.5 486.4 L1158.0 486.3 L1157.5 486.1 L1157.0 485.9 L1156.5 485.6 L1156.0 485.3 L1155.5 485.0 L1155.0 484.7 L1154.5 484.3 L1154.0 483.9 L1153.5 483.5 L1153.0 483.1 L1152.5 482.6 L1152.0 482.1 L1151.5 481.5 L1151.0 481.0 L1150.5 480.4 L1150.0 479.8 L1149.5 479.2 L1149.0 478.5 L1148.5 477.8 L1148.0 477.1 L1147.5 476.4 L1147.0 475.6 L1146.5 474.8 L1146.0 474.0 L1145.5 473.2 L1145.0 472.4 L1144.5 471.5 L1144.0 470.6 L1143.5 469.7 L1143.0 468.8 L1142.5 467.9 L1142.0 466.9 L1141.5 466.0 L1141.0 465.0 L1140.5 464.0 L1140.0 463.0 L1139.5 461.9 L1139.0 460.9 L1138.5 459.8 L1138.0 458.8 L1137.5 457.7 L1137.0 456.6 L1136.5 455.5 L1136.0 454.4 L1135.5 453.3 L1135.0 452.2 L1134.5 451.1 L1134.0 449.9 L1133.5 448.8 L1133.0 447.7 L1132.5 446.5 L1132.0 445.4 L1131.5 444.2 L1131.0 443.1 L1130.5 442.0 L1130.0 440.8 L1129.5 439.7 L1129.0 438.5 L1128.5 437.4 L1128.0 436.3 L1127.5 435.1 L1127.0 434.0 L1126.5 432.9 L1126.0 431.8 L1125.5 430.7 L1125.0 429.6 L1124.5 428.5 L1124.0 427.4 L1123.5 426.4 L1123.0 425.3 L1122.5 424.3 L1122.0 423.2 L1121.5 422.2 L1121.0 421.2 L1120.5 420.2 L1120.0 419.3 L1119.5 418.3 L1119.0 417.4 L1118.5 416.5 L1118.0 415.6 L1117.5 414.7 L1117.0 413.8 L1116.5 413.0 L1116.0 412.2 L1115.5 411.4 L1115.0 410.6 L1114.5 409.8 L1114.0 409.1 L1113.5 408.4 L1113.0 407.7 L1112.5 407.0 L1112.0 406.4 L1111.5 405.8 L1111.0 405.2 L1110.5 404.7 L1110.0 404.1 L1109.5 403.6 L1109.0 403.1 L1108.5 402.7 L1108.0 402.3 L1107.5 401.9 L1107.0 401.5 L1106.5 401.2 L1106.0 400.9 L1105.5 400.6 L1105.0 400.3 L1104.5 400.1 L1104.0 399.9 L1103.5 399.8 L1103.0 399.6 L1102.5 399.5 L1102.0 399.5 L1101.5 399.4 L1101.0 399.4 L1100.5 399.4 L1100.0 399.5 L1099.5 399.5 L1099.0 399.7 L1098.5 399.8 L1098.0 400.0 L1097.5 400.2 L1097.0 400.4 L1096.5 400.6 L1096.0 400.9 L1095.5 401.2 L1095.0 401.6 L1094.5 402.0 L1094.0 402.4 L1093.5 402.8 L1093.0 403.2 L1092.5 403.7 L1092.0 404.2 L1091.5 404.8 L1091.0 405.3 L1090.5 405.9 L1090.0 406.5 L1089.5 407.2 L1089.0 407.8 L1088.5 408.5 L1088.0 409.2 L1087.5 410.0 L1087.0 410.7 L1086.5 411.5 L1086.0 412.3 L1085.5 413.1 L1085.0 414.0 L1084.5 414.9 L1084.0 415.7 L1083.5 416.6 L1083.0 417.6 L1082.5 418.5 L1082.0 419.5 L1081.5 420.4 L1081.0 421.4 L1080.5 422.4 L1080.0 423.4 L1079.5 424.5 L1079.0 425.5 L1078.5 426.6 L1078.0 427.6 L1077.5 428.7 L1077.0 429.8 L1076.5 430.9 L1076.0 432.0 L1075.5 433.1 L1075.0 434.2 L1074.5 435.3 L1074.0 436.5 L1073.5 437.6 L1073.0 438.8 L1072.5 439.9 L1072.0 441.0 L1071.5 442.2 L1071.0 443.3 L1070.5 444.5 L1070.0 445.6 L1069.5 446.8 L1069.0 447.9 L1068.5 449.0 L1068.0 450.2 L1067.5 451.3 L1067.0 452.4 L1066.5 453.5 L1066.0 454.7 L1065.5 455.8 L1065.0 456.8 L1064.5 457.9 L1064.0 459.0 L1063.5 460.1 L1063.0 461.1 L1062.5 462.1 L1062.0 463.2 L1061.5 464.2 L1061.0 465.2 L1060.5 466.2 L1060.0 467.1 L1059.5 468.1 L1059.0 469.0 L1058.5 469.9 L1058.0 470.8 L1057.5 471.7 L1057.0 472.6 L1056.5 473.4 L1056.0 474.2 L1055.5 475.0 L1055.0 475.8 L1054.5 476.5 L1054.0 477.2 L1053.5 477.9 L1053.0 478.6 L1052.5 479.3 L1052.0 479.9 L1051.5 480.5 L1051.0 481.1 L1050.5 481.7 L1050.0 482.2 L1049.5 482.7 L1049.0 483.1 L1048.5 483.6 L1048.0 484.0 L1047.5 484.4 L1047.0 484.8 L1046.5 485.1 L1046.0 485.4 L1045.5 485.7 L1045.0 485.9 L1044.5 486.1 L1044.0 486.3 L1043.5 486.5 L1043.0 486.6 L1042.5 486.7 L1042.0 486.8 L1041.5 486.8 L1041.0 486.8 L1040.5 486.8 L1040.0 486.7 L1039.5 486.6 L1039.0 486.5 L1038.5 486.4 L1038.0 486.2 L1037.5 486.0 L1037.0 485.8 L1036.5 485.5 L1036.0 485.2 L1035.5 484.9 L1035.0 484.5 L1034.5 484.2 L1034.0 483.8 L1033.5 483.3 L1033.0 482.9 L1032.5 482.4 L1032.0 481.9 L1031.5 481.3 L1031.0 480.8 L1030.5 480.2 L1030.0 479.5 L1029.5 478.9 L1029.0 478.2 L1028.5 477.5 L1028.0 476.8 L1027.5 476.1 L1027.0 475.3 L1026.5 474.5 L1026.0 473.7 L1025.5 472.9 L1025.0 472.0 L1024.5 471.2 L1024.0 470.3 L1023.5 469.4 L1023.0 468.5 L1022.5 467.5 L1022.0 466.6 L1021.5 465.6 L1021.0 464.6 L1020.5 463.6 L1020.0 462.6 L1019.5 461.5 L1019.0 460.5 L1018.5 459.4 L1018.0 458.4 L1017.5 457.3 L1017.0 456.2 L1016.5 455.1 L1016.0 454.0 L1015.5 452.9 L1015.0 451.8 L1014.5 450.6 L1014.0 449.5 L1013.5 448.4 L1013.0 447.2 L1012.5 446.1 L1012.0 444.9 L1011.5 443.8 L1011.0 442.6 L1010.5 441.5 L1010.0 440.4 L1009.5 439.2 L1009.0 438.1 L1008.5 436.9 L1008.0 435.8 L1007.5 434.7 L1007.0 433.6 L1006.5 432.4 L1006.0 431.3 L1005.5 430.2 L1005.0 429.1 L1004.5 428.1 L1004.0 427.0 L1003.5 425.9 L1003.0 424.9 L1002.5 423.8 L1002.0 422.8 L1001.5 421.8 L1001.0 420.8 L1000.5 419.8 L1000.0 418.9 L999.5 417.9 L999.0 417.0 L998.5 416.1 L998.0 415.2 L997.5 414.3 L997.0 413.5 L996.5 412.6 L996.0 411.8 L995.5 411.0 L995.0 410.3 L994.5 409.5 L994.0 408.8 L993.5 408.1 L993.0 407.4 L992.5 406.8 L992.0 406.2 L991.5 405.6 L991.0 405.0 L990.5 404.4 L990.0 403.9 L989.5 403.4 L989.0 403.0 L988.5 402.5 L988.0 402.1 L987.5 401.7 L987.0 401.4 L986.5 401.0 L986.0 400.7 L985.5 400.5 L985.0 400.2 L984.5 400.0 L984.0 399.9 L983.5 399.7 L983.0 399.6 L982.5 399.5 L982.0 399.4 L981.5 399.4 L981.0 399.4 L980.5 399.4 L980.0 399.5 L979.5 399.6 L979.0 399.7 L978.5 399.9 L978.0 400.0 L977.5 400.2 L977.0 400.5 L976.5 400.7 L976.0 401.0 L975.5 401.4 L975.0 401.7 L974.5 402.1 L974.0 402.5 L973.5 403.0 L973.0 403.4 L972.5 403.9 L972.0 404.4 L971.5 405.0 L971.0 405.6 L970.5 406.2 L970.0 406.8 L969.5 407.4 L969.0 408.1 L968.5 408.8 L968.0 409.5 L967.5 410.3 L967.0 411.0 L966.5 411.8 L966.0 412.6 L965.5 413.5 L965.0 414.3 L964.5 415.2 L964.0 416.1 L963.5 417.0 L963.0 417.9 L962.5 418.9 L962.0 419.8 L961.5 420.8 L961.0 421.8 L960.5 422.8 L960.0 423.8 L959.5 424.9 L959.0 425.9 L958.5 427.0 L958.0 428.1 L957.5 429.1 L957.0 430.2 L956.5 431.3 L956.0 432.4 L955.5 433.6 L955.0 434.7 L954.5 435.8 L954.0 436.9 L953.5 438.1 L953.0 439.2 L952.5 440.4 L952.0 441.5 L951.5 442.6 L951.0 443.8 L950.5 444.9 L950.0 446.1 L949.5 447.2 L949.0 448.4 L948.5 449.5 L948.0 450.6 L947.5 451.8 L947.0 452.9 L946.5 454.0 L946.0 455.1 L945.5 456.2 L945.0 457.3 L944.5 458.4 L944.0 459.4 L943.5 460.5 L943.0 461.5 L942.5 462.6 L942.0 463.6 L941.5 464.6 L941.0 465.6 L940.5 466.6 L940.0 467.5 L939.5 468.5 L939.0 469.4 L938.5 470.3 L938.0 471.2 L937.5 472.0 L937.0 472.9 L936.5 473.7 L936.0 474.5 L935.5 475.3 L935.0 476.1 L934.5 476.8 L934.0 477.5 L933.5 478.2 L933.0 478.9 L932.5 479.5 L932.0 480.2 L931.5 480.8 L931.0 481.3 L930.5 481.9 L930.0 482.4 L929.5 482.9 L929.0 483.3 L928.5 483.8 L928.0 484.2 L927.5 484.5 L927.0 484.9 L926.5 485.2 L926.0 485.5 L925.5 485.8 L925.0 486.0 L924.5 486.2 L924.0 486.4 L923.5 486.5 L923.0 486.6 L922.5 486.7 L922.0 486.8 L921.5 486.8 L921.0 486.8 L920.5 486.8 L920.0 486.7 L919.5 486.6 L919.0 486.5 L918.5 486.3 L918.0 486.1 L917.5 485.9 L917.0 485.7 L916.5 485.4 L916.0 485.1 L915.5 484.8 L915.0 484.4 L914.5 484.0 L914.0 483.6 L913.5 483.1 L913.0 482.7 L912.5 482.2 L912.0 481.7 L911.5 481.1 L911.0 480.5 L910.5 479.9 L910.0 479.3 L909.5 478.6 L909.0 477.9 L908.5 477.2 L908.0 476.5 L907.5 475.8 L907.0 475.0 L906.5 474.2 L906.0 473.4 L905.5 472.6 L905.0 471.7 L904.5 470.8 L904.0 469.9 L903.5 469.0 L903.0 468.1 L902.5 467.1 L902.0 466.2 L901.5 465.2 L901.0 464.2 L900.5 463.2 L900.0 462.1 L899.5 461.1 L899.0 460.1 L898.5 459.0 L898.0 457.9 L897.5 456.8 L897.0 455.8 L896.5 454.7 L896.0 453.5 L895.5 452.4 L895.0 451.3 L894.5 450.2 L894.0 449.0 L893.5 447.9 L893.0 446.8 L892.5 445.6 L892.0 444.5 L891.5 443.3 L891.0 442.2 L890.5 441.0 L890.0 439.9 L889.5 438.8 L889.0 437.6 L888.5 436.5 L888.0 435.3 L887.5 434.2 L887.0 433.1 L886.5 432.0 L886.0 430.9 L885.5 429.8 L885.0 428.7 L884.5 427.6 L884.0 426.6 L883.5 425.5 L883.0 424.5 L882.5 423.4 L882.0 422.4 L881.5 421.4 L881.0 420.4 L880.5 419.5 L880.0 418.5 L879.5 417.6 L879.0 416.6 L878.5 415.7 L878.0 414.9 L877.5 414.0 L877.0 413.1 L876.5 412.3 L876.0 411.5 L875.5 410.7 L875.0 410.0 L874.5 409.2 L874.0 408.5 L873.5 407.8 L873.0 407.2 L872.5 406.5 L872.0 405.9 L871.5 405.3 L871.0 404.8 L870.5 404.2 L870.0 403.7 L869.5 403.2 L869.0 402.8 L868.5 402.4 L868.0 402.0 L867.5 401.6 L867.0 401.2 L866.5 400.9 L866.0 400.6 L865.5 400.4 L865.0 400.2 L864.5 400.0 L864.0 399.8 L863.5 399.7 L863.0 399.5 L862.5 399.5 L862.0 399.4 L861.5 399.4 L861.0 399.4 L860.5 399.5 L860.0 399.5 L859.5 399.6 L859.0 399.8 L858.5 399.9 L858.0 400.1 L857.5 400.3 L857.0 400.6 L856.5 400.9 L856.0 401.2 L855.5 401.5 L855.0 401.9 L854.5 402.3 L854.0 402.7 L853.5 403.1 L853.0 403.6 L852.5 404.1 L852.0 404.7 L851.5 405.2 L851.0 405.8 L850.5 406.4 L850.0 407.0 L849.5 407.7 L849.0 408.4 L848.5 409.1 L848.0 409.8 L847.5 410.6 L847.0 411.4 L846.5 412.2 L846.0 413.0 L845.5 413.8 L845.0 414.7 L844.5 415.6 L844.0 416.5 L843.5 417.4 L843.0 418.3 L842.5 419.3 L842.0 420.2 L841.5 421.2 L841.0 422.2 L840.5 423.2 L840.0 424.3 L839.5 425.3 L839.0 426.4 L838.5 427.4 L838.0 428.5 L837.5 429.6 L837.0 430.7 L836.5 431.8 L836.0 432.9 L835.5 434.0 L835.0 435.1 L834.5 436.3 L834.0 437.4 L833.5 438.5 L833.0 439.7 L832.5 440.8 L832.0 442.0 L831.5 443.1 L831.0 444.2 L830.5 445.4 L830.0 446.5 L829.5 447.7 L829.0 448.8 L828.5 449.9 L828.0 451.1 L827.5 452.2 L827.0 453.3 L826.5 454.4 L826.0 455.5 L825.5 456.6 L825.0 457.7 L824.5 458.8 L824.0 459.8 L823.5 460.9 L823.0 461.9 L822.5 463.0 L822.0 464.0 L821.5 465.0 L821.0 466.0 L820.5 466.9 L820.0 467.9 L819.5 468.8 L819.0 469.7 L818.5 470.6 L818.0 471.5 L817.5 472.4 L817.0 473.2 L816.5 474.0 L816.0 474.8 L815.5 475.6 L815.0 476.4 L814.5 477.1 L814.0 477.8 L813.5 478.5 L813.0 479.2 L812.5 479.8 L812.0 480.4 L811.5 481.0 L811.0 481.5 L810.5 482.1 L810.0 482.6 L809.5 483.1 L809.0 483.5 L808.5 483.9 L808.0 484.3 L807.5 484.7 L807.0 485.0 L806.5 485.3 L806.0 485.6 L805.5 485.9 L805.0 486.1 L804.5 486.3 L804.0 486.4 L803.5 486.6 L803.0 486.7 L802.5 486.7 L802.0 486.8 L801.5 486.8 L801.0 486.8 L800.5 486.7 L800.0 486.7 L799.5 486.5 L799.0 486.4 L798.5 486.2 L798.0 486.0 L797.5 485.8 L797.0 485.6 L796.5 485.3 L796.0 485.0 L795.5 484.6 L795.0 484.2 L794.5 483.8 L794.0 483.4 L793.5 483.0 L793.0 482.5 L792.5 482.0 L792.0 481.4 L791.5 480.9 L791.0 480.3 L790.5 479.7 L790.0 479.0 L789.5 478.4 L789.0 477.7 L788.5 477.0 L788.0 476.2 L787.5 475.5 L787.0 474.7 L786.5 473.9 L786.0 473.1 L785.5 472.2 L785.0 471.3 L784.5 470.5 L784.0 469.6 L783.5 468.6 L783.0 467.7 L782.5 466.7 L782.0 465.8 L781.5 464.8 L781.0 463.8 L780.5 462.8 L780.0 461.7 L779.5 460.7 L779.0 459.6 L778.5 458.6 L778.0 457.5 L777.5 456.4 L777.0 455.3 L776.5 454.2 L776.0 453.1 L775.5 452.0 L775.0 450.9 L774.5 449.7 L774.0 448.6 L773.5 447.4 L773.0 446.3 L772.5 445.2 L772.0 444.0 L771.5 442.9 L771.0 441.7 L770.5 440.6 L770.0 439.4 L769.5 438.3 L769.0 437.2 L768.5 436.0 L768.0 434.9 L767.5 433.8 L767.0 432.7 L766.5 431.5 L766.0 430.4 L765.5 429.4 L765.0 428.3 L764.5 427.2 L764.0 426.1 L763.5 425.1 L763.0 424.1 L762.5 423.0 L762.0 422.0 L761.5 421.0 L761.0 420.0 L760.5 419.1 L760.0 418.1 L759.5 417.2 L759.0 416.3 L758.5 415.4 L758.0 414.5 L757.5 413.6 L757.0 412.8 L756.5 412.0 L756.0 411.2 L755.5 410.4 L755.0 409.7 L754.5 409.0 L754.0 408.3 L753.5 407.6 L753.0 406.9 L752.5 406.3 L752.0 405.7 L751.5 405.1 L751.0 404.5 L750.5 404.0 L750.0 403.5 L749.5 403.1 L749.0 402.6 L748.5 402.2 L748.0 401.8 L747.5 401.4 L747.0 401.1 L746.5 400.8 L746.0 400.5 L745.5 400.3 L745.0 400.1 L744.5 399.9 L744.0 399.7 L743.5 399.6 L743.0 399.5 L742.5 399.4 L742.0 399.4 L741.5 399.4 L741.0 399.4 L740.5 399.5 L740.0 399.6 L739.5 399.7 L739.0 399.8 L738.5 400.0 L738.0 400.2 L737.5 400.4 L737.0 400.7 L736.5 401.0 L736.0 401.3 L735.5 401.7 L735.0 402.0 L734.5 402.4 L734.0 402.9 L733.5 403.3 L733.0 403.8 L732.5 404.3 L732.0 404.9 L731.5 405.4 L731.0 406.0 L730.5 406.7 L730.0 407.3 L729.5 408.0 L729.0 408.7 L728.5 409.4 L728.0 410.1 L727.5 410.9 L727.0 411.7 L726.5 412.5 L726.0 413.3 L725.5 414.2 L725.0 415.0 L724.5 415.9 L724.0 416.8 L723.5 417.7 L723.0 418.7 L722.5 419.6 L722.0 420.6 L721.5 421.6 L721.0 422.6 L720.5 423.6 L720.0 424.7 L719.5 425.7 L719.0 426.8 L718.5 427.8 L718.0 428.9 L717.5 430.0 L717.0 431.1 L716.5 432.2 L716.0 433.3 L715.5 434.4 L715.0 435.6 L714.5 436.7 L714.0 437.8 L713.5 439.0 L713.0 440.1 L712.5 441.3 L712.0 442.4 L711.5 443.6 L711.0 444.7 L710.5 445.8 L710.0 447.0 L709.5 448.1 L709.0 449.3 L708.5 450.4 L708.0 451.5 L707.5 452.6 L707.0 453.8 L706.5 454.9 L706.0 456.0 L705.5 457.1 L705.0 458.1 L704.5 459.2 L704.0 460.3 L703.5 461.3 L703.0 462.4 L702.5 463.4 L702.0 464.4 L701.5 465.4 L701.0 466.4 L700.5 467.3 L700.0 468.3 L699.5 469.2 L699.0 470.1 L698.5 471.0 L698.0 471.9 L697.5 472.7 L697.0 473.6 L696.5 474.4 L696.0 475.2 L695.5 475.9 L695.0 476.7 L694.5 477.4 L694.0 478.1 L693.5 478.8 L693.0 479.4 L692.5 480.0 L692.0 480.6 L691.5 481.2 L691.0 481.8 L690.5 482.3 L690.0 482.8 L689.5 483.2 L689.0 483.7 L688.5 484.1 L688.0 484.5 L687.5 484.8 L687.0 485.2 L686.5 485.5 L686.0 485.7 L685.5 486.0 L685.0 486.2 L684.5 486.3 L684.0 486.5 L683.5 486.6 L683.0 486.7 L682.5 486.8 L682.0 486.8 L681.5 486.8 L681.0 486.8 L680.5 486.7 L680.0 486.6 L679.5 486.5 L679.0 486.3 L678.5 486.2 L678.0 486.0 L677.5 485.7 L677.0 485.5 L676.5 485.2 L676.0 484.8 L675.5 484.5 L675.0 484.1 L674.5 483.7 L674.0 483.2 L673.5 482.8 L673.0 482.3 L672.5 481.8 L672.0 481.2 L671.5 480.6 L671.0 480.0 L670.5 479.4 L670.0 478.8 L669.5 478.1 L669.0 477.4 L668.5 476.7 L668.0 475.9 L667.5 475.2 L667.0 474.4 L666.5 473.6 L666.0 472.7 L665.5 471.9 L665.0 471.0 L664.5 470.1 L664.0 469.2 L663.5 468.3 L663.0 467.3 L662.5 466.4 L662.0 465.4 L661.5 464.4 L661.0 463.4 L660.5 462.4 L660.0 461.3 L659.5 460.3 L659.0 459.2 L658.5 458.1 L658.0 457.1 L657.5 456.0 L657.0 454.9 L656.5 453.8 L656.0 452.6 L655.5 451.5 L655.0 450.4 L654.5 449.3 L654.0 448.1 L653.5 447.0 L653.0 445.8 L652.5 444.7 L652.0 443.6 L651.5 442.4 L651.0 441.3 L650.5 440.1 L650.0 439.0 L649.5 437.8 L649.0 436.7 L648.5 435.6 L648.0 434.4 L647.5 433.3 L647.0 432.2 L646.5 431.1 L646.0 430.0 L645.5 428.9 L645.0 427.8 L644.5 426.8 L644.0 425.7 L643.5 424.7 L643.0 423.6 L642.5 422.6 L642.0 421.6 L641.5 420.6 L641.0 419.6 L640.5 418.7 L640.0 417.7 L639.5 416.8 L639.0 415.9 L638.5 415.0 L638.0 414.2 L637.5 413.3 L637.0 412.5 L636.5 411.7 L636.0 410.9 L635.5 410.1 L635.0 409.4 L634.5 408.7 L634.0 408.0 L633.5 407.3 L633.0 406.7 L632.5 406.0 L632.0 405.4 L631.5 404.9 L631.0 404.3 L630.5 403.8 L630.0 403.3 L629.5 402.9 L629.0 402.4 L628.5 402.0 L628.0 401.7 L627.5 401.3 L627.0 401.0 L626.5 400.7 L626.0 400.4 L625.5 400.2 L625.0 400.0 L624.5 399.8 L624.0 399.7 L623.5 399.6 L623.0 399.5 L622.5 399.4 L622.0 399.4 L621.5 399.4 L621.0 399.4 L620.5 399.5 L620.0 399.6 L619.5 399.7 L619.0 399.9 L618.5 400.1 L618.0 400.3 L617.5 400.5 L617.0 400.8 L616.5 401.1 L616.0 401.4 L615.5 401.8 L615.0 402.2 L614.5 402.6 L614.0 403.1 L613.5 403.5 L613.0 404.0 L612.5 404.5 L612.0 405.1 L611.5 405.7 L611.0 406.3 L610.5 406.9 L610.0 407.6 L609.5 408.3 L609.0 409.0 L608.5 409.7 L608.0 410.4 L607.5 411.2 L607.0 412.0 L606.5 412.8 L606.0 413.6 L605.5 414.5 L605.0 415.4 L604.5 416.3 L604.0 417.2 L603.5 418.1 L603.0 419.1 L602.5 420.0 L602.0 421.0 L601.5 422.0 L601.0 423.0 L600.5 424.1 L600.0 425.1 L599.5 426.1 L599.0 427.2 L598.5 428.3 L598.0 429.4 L597.5 430.4 L597.0 431.5 L596.5 432.7 L596.0 433.8 L595.5 434.9 L595.0 436.0 L594.5 437.2 L594.0 438.3 L593.5 439.4 L593.0 440.6 L592.5 441.7 L592.0 442.9 L591.5 444.0 L591.0 445.2 L590.5 446.3 L590.0 447.4 L589.5 448.6 L589.0 449.7 L588.5 450.9 L588.0 452.0 L587.5 453.1 L587.0 454.2 L586.5 455.3 L586.0 456.4 L585.5 457.5 L585.0 458.6 L584.5 459.6 L584.0 460.7 L583.5 461.7 L583.0 462.8 L582.5 463.8 L582.0 464.8 L581.5 465.8 L581.0 466.7 L580.5 467.7 L580.0 468.6 L579.5 469.6 L579.0 470.5 L578.5 471.3 L578.0 472.2 L577.5 473.1 L577.0 473.9 L576.5 474.7 L576.0 475.5 L575.5 476.2 L575.0 477.0 L574.5 477.7 L574.0 478.4 L573.5 479.0 L573.0 479.7 L572.5 480.3 L572.0 480.9 L571.5 481.4 L571.0 482.0 L570.5 482.5 L570.0 483.0 L569.5 483.4 L569.0 483.8 L568.5 484.2 L568.0 484.6 L567.5 485.0 L567.0 485.3 L566.5 485.6 L566.0 485.8 L565.5 486.0 L565.0 486.2 L564.5 486.4 L564.0 486.5 L563.5 486.7 L563.0 486.7 L562.5 486.8 L562.0 486.8 L561.5 486.8 L561.0 486.7 L560.5 486.7 L560.0 486.6 L559.5 486.4 L559.0 486.3 L558.5 486.1 L558.0 485.9 L557.5 485.6 L557.0 485.3 L556.5 485.0 L556.0 484.7 L555.5 484.3 L555.0 483.9 L554.5 483.5 L554.0 483.1 L553.5 482.6 L553.0 482.1 L552.5 481.5 L552.0 481.0 L551.5 480.4 L551.0 479.8 L550.5 479.2 L550.0 478.5 L549.5 477.8 L549.0 477.1 L548.5 476.4 L548.0 475.6 L547.5 474.8 L547.0 474.0 L546.5 473.2 L546.0 472.4 L545.5 471.5 L545.0 470.6 L544.5 469.7 L544.0 468.8 L543.5 467.9 L543.0 466.9 L542.5 466.0 L542.0 465.0 L541.5 464.0 L541.0 463.0 L540.5 461.9 L540.0 460.9 L539.5 459.8 L539.0 458.8 L538.5 457.7 L538.0 456.6 L537.5 455.5 L537.0 454.4 L536.5 453.3 L536.0 452.2 L535.5 451.1 L535.0 449.9 L534.5 448.8 L534.0 447.7 L533.5 446.5 L533.0 445.4 L532.5 444.2 L532.0 443.1 L531.5 442.0 L531.0 440.8 L530.5 439.7 L530.0 438.5 L529.5 437.4 L529.0 436.3 L528.5 435.1 L528.0 434.0 L527.5 432.9 L527.0 431.8 L526.5 430.7 L526.0 429.6 L525.5 428.5 L525.0 427.4 L524.5 426.4 L524.0 425.3 L523.5 424.3 L523.0 423.2 L522.5 422.2 L522.0 421.2 L521.5 420.2 L521.0 419.3 L520.5 418.3 L520.0 417.4 L519.5 416.5 L519.0 415.6 L518.5 414.7 L518.0 413.8 L517.5 413.0 L517.0 412.2 L516.5 411.4 L516.0 410.6 L515.5 409.8 L515.0 409.1 L514.5 408.4 L514.0 407.7 L513.5 407.0 L513.0 406.4 L512.5 405.8 L512.0 405.2 L511.5 404.7 L511.0 404.1 L510.5 403.6 L510.0 403.1 L509.5 402.7 L509.0 402.3 L508.5 401.9 L508.0 401.5 L507.5 401.2 L507.0 400.9 L506.5 400.6 L506.0 400.3 L505.5 400.1 L505.0 399.9 L504.5 399.8 L504.0 399.6 L503.5 399.5 L503.0 399.5 L502.5 399.4 L502.0 399.4 L501.5 399.4 L501.0 399.5 L500.5 399.5 L500.0 399.7 L499.5 399.8 L499.0 400.0 L498.5 400.2 L498.0 400.4 L497.5 400.6 L497.0 400.9 L496.5 401.2 L496.0 401.6 L495.5 402.0 L495.0 402.4 L494.5 402.8 L494.0 403.2 L493.5 403.7 L493.0 404.2 L492.5 404.8 L492.0 405.3 L491.5 405.9 L491.0 406.5 L490.5 407.2 L490.0 407.8 L489.5 408.5 L489.0 409.2 L488.5 410.0 L488.0 410.7 L487.5 411.5 L487.0 412.3 L486.5 413.1 L486.0 414.0 L485.5 414.9 L485.0 415.7 L484.5 416.6 L484.0 417.6 L483.5 418.5 L483.0 419.5 L482.5 420.4 L482.0 421.4 L481.5 422.4 L481.0 423.4 L480.5 424.5 L480.0 425.5 L479.5 426.6 L479.0 427.6 L478.5 428.7 L478.0 429.8 L477.5 430.9 L477.0 432.0 L476.5 433.1 L476.0 434.2 L475.5 435.3 L475.0 436.5 L474.5 437.6 L474.0 438.8 L473.5 439.9 L473.0 441.0 L472.5 442.2 L472.0 443.3 L471.5 444.5 L471.0 445.6 L470.5 446.8 L470.0 447.9 L469.5 449.0 L469.0 450.2 L468.5 451.3 L468.0 452.4 L467.5 453.5 L467.0 454.7 L466.5 455.8 L466.0 456.8 L465.5 457.9 L465.0 459.0 L464.5 460.1 L464.0 461.1 L463.5 462.1 L463.0 463.2 L462.5 464.2 L462.0 465.2 L461.5 466.2 L461.0 467.1 L460.5 468.1 L460.0 469.0 L459.5 469.9 L459.0 470.8 L458.5 471.7 L458.0 472.6 L457.5 473.4 L457.0 474.2 L456.5 475.0 L456.0 475.8 L455.5 476.5 L455.0 477.2 L454.5 477.9 L454.0 478.6 L453.5 479.3 L453.0 479.9 L452.5 480.5 L452.0 481.1 L451.5 481.7 L451.0 482.2 L450.5 482.7 L450.0 483.1 L449.5 483.6 L449.0 484.0 L448.5 484.4 L448.0 484.8 L447.5 485.1 L447.0 485.4 L446.5 485.7 L446.0 485.9 L445.5 486.1 L445.0 486.3 L444.5 486.5 L444.0 486.6 L443.5 486.7 L443.0 486.8 L442.5 486.8 L442.0 486.8 L441.5 486.8 L441.0 486.7 L440.5 486.6 L440.0 486.5 L439.5 486.4 L439.0 486.2 L438.5 486.0 L438.0 485.8 L437.5 485.5 L437.0 485.2 L436.5 484.9 L436.0 484.5 L435.5 484.2 L435.0 483.8 L434.5 483.3 L434.0 482.9 L433.5 482.4 L433.0 481.9 L432.5 481.3 L432.0 480.8 L431.5 480.2 L431.0 479.5 L430.5 478.9 L430.0 478.2 L429.5 477.5 L429.0 476.8 L428.5 476.1 L428.0 475.3 L427.5 474.5 L427.0 473.7 L426.5 472.9 L426.0 472.0 L425.5 471.2 L425.0 470.3 L424.5 469.4 L424.0 468.5 L423.5 467.5 L423.0 466.6 L422.5 465.6 L422.0 464.6 L421.5 463.6 L421.0 462.6 L420.5 461.5 L420.0 460.5 L419.5 459.4 L419.0 458.4 L418.5 457.3 L418.0 456.2 L417.5 455.1 L417.0 454.0 L416.5 452.9 L416.0 451.8 L415.5 450.6 L415.0 449.5 L414.5 448.4 L414.0 447.2 L413.5 446.1 L413.0 444.9 L412.5 443.8 L412.0 442.6 L411.5 441.5 L411.0 440.4 L410.5 439.2 L410.0 438.1 L409.5 436.9 L409.0 435.8 L408.5 434.7 L408.0 433.6 L407.5 432.4 L407.0 431.3 L406.5 430.2 L406.0 429.1 L405.5 428.1 L405.0 427.0 L404.5 425.9 L404.0 424.9 L403.5 423.8 L403.0 422.8 L402.5 421.8 L402.0 420.8 L401.5 419.8 L401.0 418.9 L400.5 417.9 L400.0 417.0 L399.5 416.1 L399.0 415.2 L398.5 414.3 L398.0 413.5 L397.5 412.6 L397.0 411.8 L396.5 411.0 L396.0 410.3 L395.5 409.5 L395.0 408.8 L394.5 408.1 L394.0 407.4 L393.5 406.8 L393.0 406.2 L392.5 405.6 L392.0 405.0 L391.5 404.4 L391.0 403.9 L390.5 403.4 L390.0 403.0 L389.5 402.5 L389.0 402.1 L388.5 401.7 L388.0 401.4 L387.5 401.0 L387.0 400.7 L386.5 400.5 L386.0 400.2 L385.5 400.0 L385.0 399.9 L384.5 399.7 L384.0 399.6 L383.5 399.5 L383.0 399.4 L382.5 399.4 L382.0 399.4 L381.5 399.4 L381.0 399.5 L380.5 399.6 L380.0 399.7 L379.5 399.9 L379.0 400.0 L378.5 400.2 L378.0 400.5 L377.5 400.7 L377.0 401.0 L376.5 401.4 L376.0 401.7 L375.5 402.1 L375.0 402.5 L374.5 403.0 L374.0 403.4 L373.5 403.9 L373.0 404.4 L372.5 405.0 L372.0 405.6 L371.5 406.2 L371.0 406.8 L370.5 407.4 L370.0 408.1 L369.5 408.8 L369.0 409.5 L368.5 410.3 L368.0 411.0 L367.5 411.8 L367.0 412.6 L366.5 413.5 L366.0 414.3 L365.5 415.2 L365.0 416.1 L364.5 417.0 L364.0 417.9 L363.5 418.9 L363.0 419.8 L362.5 420.8 L362.0 421.8 L361.5 422.8 L361.0 423.8 L360.5 424.9 L360.0 425.9 L359.5 427.0 L359.0 428.1 L358.5 429.1 L358.0 430.2 L357.5 431.3 L357.0 432.4 L356.5 433.6 L356.0 434.7 L355.5 435.8 L355.0 436.9 L354.5 438.1 L354.0 439.2 L353.5 440.4 L353.0 441.5 L352.5 442.6 L352.0 443.8 L351.5 444.9 L351.0 446.1 L350.5 447.2 L350.0 448.4 L349.5 449.5 L349.0 450.6 L348.5 451.8 L348.0 452.9 L347.5 454.0 L347.0 455.1 L346.5 456.2 L346.0 457.3 L345.5 458.4 L345.0 459.4 L344.5 460.5 L344.0 461.5 L343.5 462.6 L343.0 463.6 L342.5 464.6 L342.0 465.6 L341.5 466.6 L341.0 467.5 L340.5 468.5 L340.0 469.4 L339.5 470.3 L339.0 471.2 L338.5 472.0 L338.0 472.9 L337.5 473.7 L337.0 474.5 L336.5 475.3 L336.0 476.1 L335.5 476.8 L335.0 477.5 L334.5 478.2 L334.0 478.9 L333.5 479.5 L333.0 480.2 L332.5 480.8 L332.0 481.3 L331.5 481.9 L331.0 482.4 L330.5 482.9 L330.0 483.3 L329.5 483.8 L329.0 484.2 L328.5 484.5 L328.0 484.9 L327.5 485.2 L327.0 485.5 L326.5 485.8 L326.0 486.0 L325.5 486.2 L325.0 486.4 L324.5 486.5 L324.0 486.6 L323.5 486.7 L323.0 486.8 L322.5 486.8 L322.0 486.8 L321.5 486.8 L321.0 486.7 L320.5 486.6 L320.0 486.5 L319.5 486.3 L319.0 486.1 L318.5 485.9 L318.0 485.7 L317.5 485.4 L317.0 485.1 L316.5 484.8 L316.0 484.4 L315.5 484.0 L315.0 483.6 L314.5 483.1 L314.0 482.7 L313.5 482.2 L313.0 481.7 L312.5 481.1 L312.0 480.5 L311.5 479.9 L311.0 479.3 L310.5 478.6 L310.0 477.9 L309.5 477.2 L309.0 476.5 L308.5 475.8 L308.0 475.0 L307.5 474.2 L307.0 473.4 L306.5 472.6 L306.0 471.7 L305.5 470.8 L305.0 469.9 L304.5 469.0 L304.0 468.1 L303.5 467.1 L303.0 466.2 L302.5 465.2 L302.0 464.2 L301.5 463.2 L301.0 462.1 L300.5 461.1 L300.0 460.1 L299.5 459.0 L299.0 457.9 L298.5 456.8 L298.0 455.8 L297.5 454.7 L297.0 453.5 L296.5 452.4 L296.0 451.3 L295.5 450.2 L295.0 449.0 L294.5 447.9 L294.0 446.8 L293.5 445.6 L293.0 444.5 L292.5 443.3 L292.0 442.2 L291.5 441.0 L291.0 439.9 L290.5 438.8 L290.0 437.6 L289.5 436.5 L289.0 435.3 L288.5 434.2 L288.0 433.1 L287.5 432.0 L287.0 430.9 L286.5 429.8 L286.0 428.7 L285.5 427.6 L285.0 426.6 L284.5 425.5 L284.0 424.5 L283.5 423.4 L283.0 422.4 L282.5 421.4 L282.0 420.4 L281.5 419.5 L281.0 418.5 L280.5 417.6 L280.0 416.6 L279.5 415.7 L279.0 414.9 L278.5 414.0 L278.0 413.1 L277.5 412.3 L277.0 411.5 L276.5 410.7 L276.0 410.0 L275.5 409.2 L275.0 408.5 L274.5 407.8 L274.0 407.2 L273.5 406.5 L273.0 405.9 L272.5 405.3 L272.0 404.8 L271.5 404.2 L271.0 403.7 L270.5 403.2 L270.0 402.8 L269.5 402.4 L269.0 402.0 L268.5 401.6 L268.0 401.2 L267.5 400.9 L267.0 400.6 L266.5 400.4 L266.0 400.2 L265.5 400.0 L265.0 399.8 L264.5 399.7 L264.0 399.5 L263.5 399.5 L263.0 399.4 L262.5 399.4 L262.0 399.4 L261.5 399.5 L261.0 399.5 L260.5 399.6 L260.0 399.8 L259.5 399.9 L259.0 400.1 L258.5 400.3 L258.0 400.6 L257.5 400.9 L257.0 401.2 L256.5 401.5 L256.0 401.9 L255.5 402.3 L255.0 402.7 L254.5 403.1 L254.0 403.6 L253.5 404.1 L253.0 404.7 L252.5 405.2 L252.0 405.8 L251.5 406.4 L251.0 407.0 L250.5 407.7 L250.0 408.4 L249.5 409.1 L249.0 409.8 L248.5 410.6 L248.0 411.4 L247.5 412.2 L247.0 413.0 L246.5 413.8 L246.0 414.7 L245.5 415.6 L245.0 416.5 L244.5 417.4 L244.0 418.3 L243.5 419.3 L243.0 420.2 L242.5 421.2 L242.0 422.2 L241.5 423.2 L241.0 424.3 L240.5 425.3 L240.0 426.4 L239.5 427.4 L239.0 428.5 L238.5 429.6 L238.0 430.7 L237.5 431.8 L237.0 432.9 L236.5 434.0 L236.0 435.1 L235.5 436.3 L235.0 437.4 L234.5 438.5 L234.0 439.7 L233.5 440.8 L233.0 442.0 L232.5 443.1 L232.0 444.2 L231.5 445.4 L231.0 446.5 L230.5 447.7 L230.0 448.8 L229.5 449.9 L229.0 451.1 L228.5 452.2 L228.0 453.3 L227.5 454.4 L227.0 455.5 L226.5 456.6 L226.0 457.7 L225.5 458.8 L225.0 459.8 L224.5 460.9 L224.0 461.9 L223.5 463.0 L223.0 464.0 L222.5 465.0 L222.0 466.0 L221.5 466.9 L221.0 467.9 L220.5 468.8 L220.0 469.7 L219.5 470.6 L219.0 471.5 L218.5 472.4 L218.0 473.2 L217.5 474.0 L217.0 474.8 L216.5 475.6 L216.0 476.4 L215.5 477.1 L215.0 477.8 L214.5 478.5 L214.0 479.2 L213.5 479.8 L213.0 480.4 L212.5 481.0 L212.0 481.5 L211.5 482.1 L211.0 482.6 L210.5 483.1 L210.0 483.5 L209.5 483.9 L209.0 484.3 L208.5 484.7 L208.0 485.0 L207.5 485.3 L207.0 485.6 L206.5 485.9 L206.0 486.1 L205.5 486.3 L205.0 486.4 L204.5 486.6 L204.0 486.7 L203.5 486.7 L203.0 486.8 L202.5 486.8 L202.0 486.8 L201.5 486.7 L201.0 486.7 L200.5 486.5 L200.0 486.4 L199.5 486.2 L199.0 486.0 L198.5 485.8 L198.0 485.6 L197.5 485.3 L197.0 485.0 L196.5 484.6 L196.0 484.2 L195.5 483.8 L195.0 483.4 L194.5 483.0 L194.0 482.5 L193.5 482.0 L193.0 481.4 L192.5 480.9 L192.0 480.3 L191.5 479.7 L191.0 479.0 L190.5 478.4 L190.0 477.7 L189.5 477.0 L189.0 476.2 L188.5 475.5 L188.0 474.7 L187.5 473.9 L187.0 473.1 L186.5 472.2 L186.0 471.3 L185.5 470.5 L185.0 469.6 L184.5 468.6 L184.0 467.7 L183.5 466.7 L183.0 465.8 L182.5 464.8 L182.0 463.8 L181.5 462.8 L181.0 461.7 L180.5 460.7 L180.0 459.6 L179.5 458.6 L179.0 457.5 L178.5 456.4 L178.0 455.3 L177.5 454.2 L177.0 453.1 L176.5 452.0 L176.0 450.9 L175.5 449.7 L175.0 448.6 L174.5 447.4 L174.0 446.3 L173.5 445.2 L173.0 444.0 L172.5 442.9 L172.0 441.7 L171.5 440.6 L171.0 439.4 L170.5 438.3 L170.0 437.2 L169.5 436.0 L169.0 434.9 L168.5 433.8 L168.0 432.7 L167.5 431.5 L167.0 430.4 L166.5 429.4 L166.0 428.3 L165.5 427.2 L165.0 426.1 L164.5 425.1 L164.0 424.1 L163.5 423.0 L163.0 422.0 L162.5 421.0 L162.0 420.0 L161.5 419.1 L161.0 418.1 L160.5 417.2 L160.0 416.3 L159.5 415.4 L159.0 414.5 L158.5 413.6 L158.0 412.8 L157.5 412.0 L157.0 411.2 L156.5 410.4 L156.0 409.7 L155.5 409.0 L155.0 408.3 L154.5 407.6 L154.0 406.9 L153.5 406.3 L153.0 405.7 L152.5 405.1 L152.0 404.5 L151.5 404.0 L151.0 403.5 L150.5 403.1 L150.0 402.6 L149.5 402.2 L149.0 401.8 L148.5 401.4 L148.0 401.1 L147.5 400.8 L147.0 400.5 L146.5 400.3 L146.0 400.1 L145.5 399.9 L145.0 399.7 L144.5 399.6 L144.0 399.5 L143.5 399.4 L143.0 399.4 L142.5 399.4 L142.0 399.4 L141.5 399.5 L141.0 399.6 L140.5 399.7 L140.0 399.8 L139.5 400.0 L139.0 400.2 L138.5 400.4 L138.0 400.7 L137.5 401.0 L137.0 401.3 L136.5 401.7 L136.0 402.0 L135.5 402.4 L135.0 402.9 L134.5 403.3 L134.0 403.8 L133.5 404.3 L133.0 404.9 L132.5 405.4 L132.0 406.0 L131.5 406.7 L131.0 407.3 L130.5 408.0 L130.0 408.7 L129.5 409.4 L129.0 410.1 L128.5 410.9 L128.0 411.7 L127.5 412.5 L127.0 413.3 L126.5 414.2 L126.0 415.0 L125.5 415.9 L125.0 416.8 L124.5 417.7 L124.0 418.7 L123.5 419.6 L123.0 420.6 L122.5 421.6 L122.0 422.6 L121.5 423.6 L121.0 424.7 L120.5 425.7 L120.0 426.8 L119.5 427.8 L119.0 428.9 L118.5 430.0 L118.0 431.1 L117.5 432.2 L117.0 433.3 L116.5 434.4 L116.0 435.6 L115.5 436.7 L115.0 437.8 L114.5 439.0 L114.0 440.1 L113.5 441.3 L113.0 442.4 L112.5 443.6 L112.0 444.7 L111.5 445.8 L111.0 447.0 L110.5 448.1 L110.0 449.3 L109.5 450.4 L109.0 451.5 L108.5 452.6 L108.0 453.8 L107.5 454.9 L107.0 456.0 L106.5 457.1 L106.0 458.1 L105.5 459.2 L105.0 460.3 L104.5 461.3 L104.0 462.4 L103.5 463.4 L103.0 464.4 L102.5 465.4 L102.0 466.4 L101.5 467.3 L101.0 468.3 L100.5 469.2 L100.0 470.1 L99.5 471.0 L99.0 471.9 L98.5 472.7 L98.0 473.6 L97.5 474.4 L97.0 475.2 L96.5 475.9 L96.0 476.7 L95.5 477.4 L95.0 478.1 L94.5 478.8 L94.0 479.4 L93.5 480.0 L93.0 480.6 L92.5 481.2 L92.0 481.8 L91.5 482.3 L91.0 482.8 L90.5 483.2 L90.0 483.7 L89.5 484.1 L89.0 484.5 L88.5 484.8 L88.0 485.2 L87.5 485.5 L87.0 485.7 L86.5 486.0 L86.0 486.2 L85.5 486.3 L85.0 486.5 L84.5 486.6 L84.0 486.7 L83.5 486.8 L83.0 486.8 L82.5 486.8 L82.0 486.8 L81.5 486.7 L81.0 486.6 L80.5 486.5 L80.0 486.3 L79.5 486.2 L79.0 486.0 L78.5 485.7 L78.0 485.5 L77.5 485.2 L77.0 484.8 L76.5 484.5 L76.0 484.1 L75.5 483.7 L75.0 483.2 L74.5 482.8 L74.0 482.3 L73.5 481.8 L73.0 481.2 L72.5 480.6 L72.0 480.0 L71.5 479.4 L71.0 478.8 L70.5 478.1 L70.0 477.4 L69.5 476.7 L69.0 475.9 L68.5 475.2 L68.0 474.4 L67.5 473.6 L67.0 472.7 L66.5 471.9 L66.0 471.0 L65.5 470.1 L65.0 469.2 L64.5 468.3 L64.0 467.3 L63.5 466.4 L63.0 465.4 L62.5 464.4 L62.0 463.4 L61.5 462.4 L61.0 461.3 L60.5 460.3 L60.0 459.2 L59.5 458.1 L59.0 457.1 L58.5 456.0 L58.0 454.9 L57.5 453.8 L57.0 452.6 L56.5 451.5 L56.0 450.4 L55.5 449.3 L55.0 448.1 L54.5 447.0 L54.0 445.8 L53.5 444.7 L53.0 443.6 L52.5 442.4 L52.0 441.3Z" fill="#00ff00" shape-rendering="crispEdges"/><g stroke="#cccccc" stroke-width=".25"><text x="17.200000000000003" y="156.3" font-size="14.3" fill="#cccccc" textLength="27" lengthAdjust="spacingAndGlyphs">2.5V</text><text x="17.200000000000003" y="191.3" font-size="14.3" fill="#cccccc" textLength="27" lengthAdjust="spacingAndGlyphs">2.0V</text><text x="17.200000000000003" y="225.3" font-size="14.3" fill="#cccccc" textLength="27" lengthAdjust="spacingAndGlyphs">1.5V</text><text x="17.200000000000003" y="260.3" font-size="14.3" fill="#cccccc" textLength="27" lengthAdjust="spacingAndGlyphs">1.0V</text><text x="17.200000000000003" y="294.3" font-size="14.3" fill="#cccccc" textLength="27" lengthAdjust="spacingAndGlyphs">0.5V</text><text x="17.200000000000003" y="329.3" font-size="14.3" fill="#cccccc" textLength="27" lengthAdjust="spacingAndGlyphs">0.0V</text><text x="12.700000000000003" y="363.3" font-size="14.3" fill="#cccccc" textLength="31.5" lengthAdjust="spacingAndGlyphs">-0.5V</text><text x="12.700000000000003" y="398.3" font-size="14.3" fill="#cccccc" textLength="31.5" lengthAdjust="spacingAndGlyphs">-1.0V</text><text x="12.700000000000003" y="432.3" font-size="14.3" fill="#cccccc" textLength="31.5" lengthAdjust="spacingAndGlyphs">-1.5V</text><text x="12.700000000000003" y="467.3" font-size="14.3" fill="#cccccc" textLength="31.5" lengthAdjust="spacingAndGlyphs">-2.0V</text><text x="12.700000000000003" y="501.3" font-size="14.3" fill="#cccccc" textLength="31.5" lengthAdjust="spacingAndGlyphs">-2.5V</text><text x="39.25" y="516.9" font-size="14.3" fill="#cccccc" textLength="26.5" lengthAdjust="spacingAndGlyphs">0ms</text><text x="159.25" y="516.9" font-size="14.3" fill="#cccccc" textLength="26.5" lengthAdjust="spacingAndGlyphs">5ms</text><text x="274.75" y="516.9" font-size="14.3" fill="#cccccc" textLength="34.5" lengthAdjust="spacingAndGlyphs">10ms</text><text x="393.75" y="516.9" font-size="14.3" fill="#cccccc" textLength="34.5" lengthAdjust="spacingAndGlyphs">15ms</text><text x="513.75" y="516.9" font-size="14.3" fill="#cccccc" textLength="34.5" lengthAdjust="spacingAndGlyphs">20ms</text><text x="633.75" y="516.9" font-size="14.3" fill="#cccccc" textLength="34.5" lengthAdjust="spacingAndGlyphs">25ms</text><text x="753.75" y="516.9" font-size="14.3" fill="#cccccc" textLength="34.5" lengthAdjust="spacingAndGlyphs">30ms</text><text x="873.75" y="516.9" font-size="14.3" fill="#cccccc" textLength="34.5" lengthAdjust="spacingAndGlyphs">35ms</text><text x="992.75" y="516.9" font-size="14.3" fill="#cccccc" textLength="34.5" lengthAdjust="spacingAndGlyphs">40ms</text><text x="1112.75" y="516.9" font-size="14.3" fill="#cccccc" textLength="34.5" lengthAdjust="spacingAndGlyphs">45ms</text><text x="1232.75" y="516.9" font-size="14.3" fill="#cccccc" textLength="34.5" lengthAdjust="spacingAndGlyphs">50ms</text></g><text x="607.3" y="145.3" font-size="13.6" font-weight="bold" fill="#00ff00" textLength="87" lengthAdjust="spacingAndGlyphs">V(N003,N002)</text></svg></div>
</div>
<div class="win" style="left:2px;top:434px;width:1276px;height:431px;border-color:#4a4a4a #000 #000 #000;background:linear-gradient(#98b4d4 0,#a9c3e0 12px,#b9d1ea 30px,#b9d1ea 100%)">
<div style="left:0;top:0;width:1274px;height:1px;background:rgba(255,255,255,.85);border-radius:6px 6px 0 0"></div>
<div style="left:0;top:5px;width:1px;height:424px;background:rgba(255,255,255,.9)"></div>
<div style="left:-1px;top:5px;width:1px;height:24px;background:#777"></div>
<div style="left:1273px;top:6px;width:1px;height:423px;background:#28d2f0"></div>
<div style="left:1px;top:428px;width:1273px;height:1px;background:#28d2f0"></div>
<svg style="left:10px;top:8px;width:14px;height:17px" viewBox="0 0 14 17"><g fill="none" stroke="#0000ff" shape-rendering="crispEdges"><path d="M1 7.500 H4"/><path d="M5 3 V12" stroke-width="2"/></g><path d="M6 5.300 L10.700 .6 M6 9.700 L12.200 16.200" stroke="#0000ff" fill="none" stroke-width="1.100"/><path d="M11.300 15.300 L8 13.900 L10.200 11.800 Z" fill="#0000ff" stroke="#0000ff" stroke-width=".6"/></svg>
<svg style="left:0;top:0;width:300px;height:30px"><text x="29.5" y="22.3" font-size="12" fill="#000" font-weight="normal" text-anchor="start" textLength="80.5" lengthAdjust="spacingAndGlyphs">pairdiffam1.asc</text></svg>
<div class="cb" style="left:1168px;top:9px;width:31px;height:17px;background:linear-gradient(#c6d8ee 0,#b3cae6 48%,#8fb0d8 52%,#a7c2e2 100%);border-color:#5a6b8c;box-shadow:inset 0 0 0 1px rgba(255,255,255,.45)"></div><div class="cb" style="left:1201px;top:9px;width:31px;height:17px;background:linear-gradient(#c6d8ee 0,#b3cae6 48%,#8fb0d8 52%,#a7c2e2 100%);border-color:#5a6b8c;box-shadow:inset 0 0 0 1px rgba(255,255,255,.45)"></div><div class="cb" style="left:1234px;top:9px;width:31px;height:17px;background:linear-gradient(#e5a99f 0,#d98577 48%,#c1402a 52%,#d2705a 100%);border-color:#5a2a2a;box-shadow:inset 0 0 0 1px rgba(255,255,255,.45)"></div><svg style="left:1168px;top:9px;width:100px;height:17px" viewBox="0 0 100 17">
<rect x="10.5" y="8.5" width="10" height="4" rx="1.2" fill="#fff" stroke="#4a5670"/>
<rect x="44.3" y="5.700" width="8" height="5.300" rx="1" fill="none" stroke="#4a5670" stroke-width="3.800"/>
<rect x="44.3" y="5.700" width="8" height="5.300" rx=".5" fill="none" stroke="#fff" stroke-width="2.100"/>
<path d="M78 4.5 L86.500 12.500 M86.500 4.500 L78 12.500" stroke="#5a3030" stroke-width="4"/><path d="M78.500 5 L86 12 M86 5 L78.500 12" stroke="#fff" stroke-width="2"/>
</svg>
<div style="left:7px;top:29px;width:1260px;height:393px;border:1px solid;border-color:#a0a0a0 #fff #fff #a0a0a0"></div>
<div style="left:8px;top:30px;width:1258px;height:391px;border:1px solid;border-color:#696969 #e3e3e3 #e3e3e3 #696969"></div>
<div style="left:9px;top:31px;width:1256px;height:389px;background:#f4f4f4;overflow:hidden"><svg style="left:-12px;top:-564px;width:1280px;height:984px" viewBox="0 0 1280 984" font-family="'Liberation Sans',sans-serif"><g fill="none" shape-rendering="crispEdges" stroke-linecap="square"><path d="M609.5 622 L609.5 626.16 L617.81 630.31 L601.19 638.62 L617.81 646.94 L601.19 655.25 L609.5 659.4 L609.5 663.56 M767.5 622 L767.5 626.16 L775.81 630.31 L759.19 638.62 L775.81 646.94 L759.19 655.25 L767.5 659.4 L767.5 663.56 M966.5 671.5 L966.5 675.66 L974.81 679.81 L958.19 688.12 L974.81 696.44 L958.19 704.75 L966.5 708.9 L966.5 713.06 M592.5 870.5 L592.5 874.66 L600.81 878.81 L584.19 887.12 L600.81 895.44 L584.19 903.75 L592.5 907.9 L592.5 912.06 M692.5 870.5 L692.5 874.66 L700.81 878.81 L684.19 887.12 L700.81 895.44 L684.19 903.75 L692.5 907.9 L692.5 912.06 M559.25 870.5 L555.1 870.5 L550.94 878.81 L542.63 862.19 L534.32 878.81 L526 862.19 L521.85 870.5 L517.69 870.5 M318.5 679.81 L318.5 683.97 M318.5 716.22 L318.5 721.37 M313.5 689.5 L322.5 689.5 M318.5 686.5 L318.5 693.5 M313.5 710.5 L322.5 710.5 M318.5 737.81 L318.5 741.97 M318.5 774.22 L318.5 779.37 M313.5 748.5 L322.5 748.5 M318.5 745.5 L318.5 752.5 M313.5 768.5 L322.5 768.5 M493.5 737.81 L493.5 741.97 M493.5 774.22 L493.5 779.37 M488.5 748.5 L497.5 748.5 M493.5 745.5 L493.5 752.5 M488.5 768.5 L497.5 768.5 M435.5 878.81 L435.5 882.97 M435.5 915.22 L435.5 920.37 M430.5 889.5 L439.5 889.5 M435.5 886.5 L435.5 893.5 M430.5 909.5 L439.5 909.5 M584.56 721.11 L584.56 754.36 M576.25 737.74 L584.56 737.74 M609.5 712.8 L584.56 729.42 M584.56 746.05 L597.03 754.36 M609.5 762.67 L599.11 752.28 L594.95 756.44 L609.5 762.67 M791.54 721.11 L791.54 754.36 M799.85 737.74 L791.54 737.74 M767.5 712.8 L791.54 729.42 M791.54 746.05 L779.07 754.36 M767.5 762.67 L776.99 752.28 L781.15 756.44 L767.5 762.67 M667.56 812.37 L667.56 845.62 M659.25 829 L667.56 829 M692.5 804.06 L667.56 820.68 M667.56 837.31 L680.03 845.62 M692.5 853.93 L682.11 843.54 L677.95 847.7 L692.5 853.93" stroke="#000090"/><path d="M318.5 679.81 L318.5 571.5 L767.5 571.5 L767.5 622 M609.5 571.5 L609.5 622 M609.5 662 L609.5 712.8 M767.5 662 L767.5 712.8 M767.5 671.5 L966.5 671.5 M609.5 704.5 L916.5 704.5 L916.5 729.5 L966.5 729.5 L966.5 713.06 M318.5 721.37 L318.5 737.5 M318.5 729.5 L294.5 729.5 L294.5 737.5 M318.5 779.37 L318.5 936.5 L692.5 936.5 L692.5 912.06 M493.5 737.5 L576.25 737.5 M800.75 737.5 L825.5 737.5 L825.5 762.5 M609.5 762.5 L767.5 762.5 M692.5 762.5 L692.5 804.06 M659.25 829.5 L592.5 829.5 L592.5 870.5 M435.5 878.81 L435.5 870.5 L517.69 870.5 M559.25 870.5 L592.5 870.5 M592.5 912.06 L592.5 936.5 M692.5 853.93 L692.5 870.5" stroke="#0000ff"/></g><path d="M284 737.5 H304 M284.5 738 L294.5 746.8 L303.5 738 M815 762.5 H835 M815.5 763 L825.5 771.8 L834.5 763 M483 779.87 H503 M483.5 780.37 L493.5 789.17 L502.5 780.37 M425 920.87 H445 M425.5 921.37 L435.5 930.17 L444.5 921.37" fill="none" stroke="#0000ff" shape-rendering="crispEdges"/><g fill="none" stroke="#000090" stroke-width="1.15"><circle cx="318.5" cy="699.49" r="16.32"/><circle cx="318.5" cy="758.19" r="16.32"/><circle cx="492.5" cy="758.19" r="16.32"/><circle cx="434.5" cy="899.19" r="16.32"/></g><g fill="#0000ff" shape-rendering="crispEdges"><rect x="607" y="569" width="5" height="5"/><rect x="765" y="669" width="5" height="5"/><rect x="607" y="702" width="5" height="5"/><rect x="316" y="727" width="5" height="5"/><rect x="690" y="760" width="5" height="5"/><rect x="590" y="868" width="5" height="5"/><rect x="590" y="934" width="5" height="5"/></g><g font-size="11.6" font-weight="bold" fill="#000"><text x="331.7" y="683" textLength="12.5" lengthAdjust="spacingAndGlyphs">V1</text><text x="331.7" y="725" textLength="10.5" lengthAdjust="spacingAndGlyphs">15</text><text x="331.7" y="740.8" textLength="13" lengthAdjust="spacingAndGlyphs">V2</text><text x="331.7" y="783" textLength="10.5" lengthAdjust="spacingAndGlyphs">15</text><text x="505.3" y="740.8" textLength="12.8" lengthAdjust="spacingAndGlyphs">V3</text><text x="505.9" y="783" textLength="87.5" lengthAdjust="spacingAndGlyphs">SINE(0 0.02 100k)</text><text x="447.3" y="882" textLength="13.2" lengthAdjust="spacingAndGlyphs">V4</text><text x="447.7" y="923.8" textLength="65.8" lengthAdjust="spacingAndGlyphs">SINE(0 5 200)</text><text x="530.9" y="858.8" textLength="13" lengthAdjust="spacingAndGlyphs">R2</text><text x="527.9" y="888.8" textLength="18" lengthAdjust="spacingAndGlyphs">10k</text><text x="280.9" y="945" textLength="83.8" lengthAdjust="spacingAndGlyphs">.tran 0 50m 0 1µ</text><text x="619.2" y="636.5" textLength="20.5" lengthAdjust="spacingAndGlyphs">RC2</text><text x="619.2" y="656.2" textLength="27.2" lengthAdjust="spacingAndGlyphs">10.3k</text><text x="777.2" y="636.5" textLength="13.8" lengthAdjust="spacingAndGlyphs">RC</text><text x="777.2" y="656.2" textLength="27.2" lengthAdjust="spacingAndGlyphs">10.3k</text><text x="604.7" y="733" textLength="13" lengthAdjust="spacingAndGlyphs">Q1</text><text x="605.2" y="752" textLength="20.2" lengthAdjust="spacingAndGlyphs">NPN</text><text x="756.7" y="733" textLength="13.5" lengthAdjust="spacingAndGlyphs">Q2</text><text x="750.2" y="752" textLength="20.2" lengthAdjust="spacingAndGlyphs">NPN</text><text x="687.9" y="823.8" textLength="13.8" lengthAdjust="spacingAndGlyphs">Q3</text><text x="688.2" y="843" textLength="20.2" lengthAdjust="spacingAndGlyphs">NPN</text><text x="603.5" y="885.8" textLength="11.4" lengthAdjust="spacingAndGlyphs">R1</text><text x="603.5" y="905" textLength="17.5" lengthAdjust="spacingAndGlyphs">10k</text><text x="702.2" y="885.8" textLength="12.6" lengthAdjust="spacingAndGlyphs">RE</text><text x="702.2" y="905" textLength="21.2" lengthAdjust="spacingAndGlyphs">4.7k</text><text x="975.9" y="686.8" textLength="12.5" lengthAdjust="spacingAndGlyphs">R3</text><text x="975.9" y="705.8" textLength="18.2" lengthAdjust="spacingAndGlyphs">10k</text></g></svg></div>
</div>
</div>
<div id="status"><div class="l"></div><div class="b"></div><div class="r"></div></div>
</body></html>
